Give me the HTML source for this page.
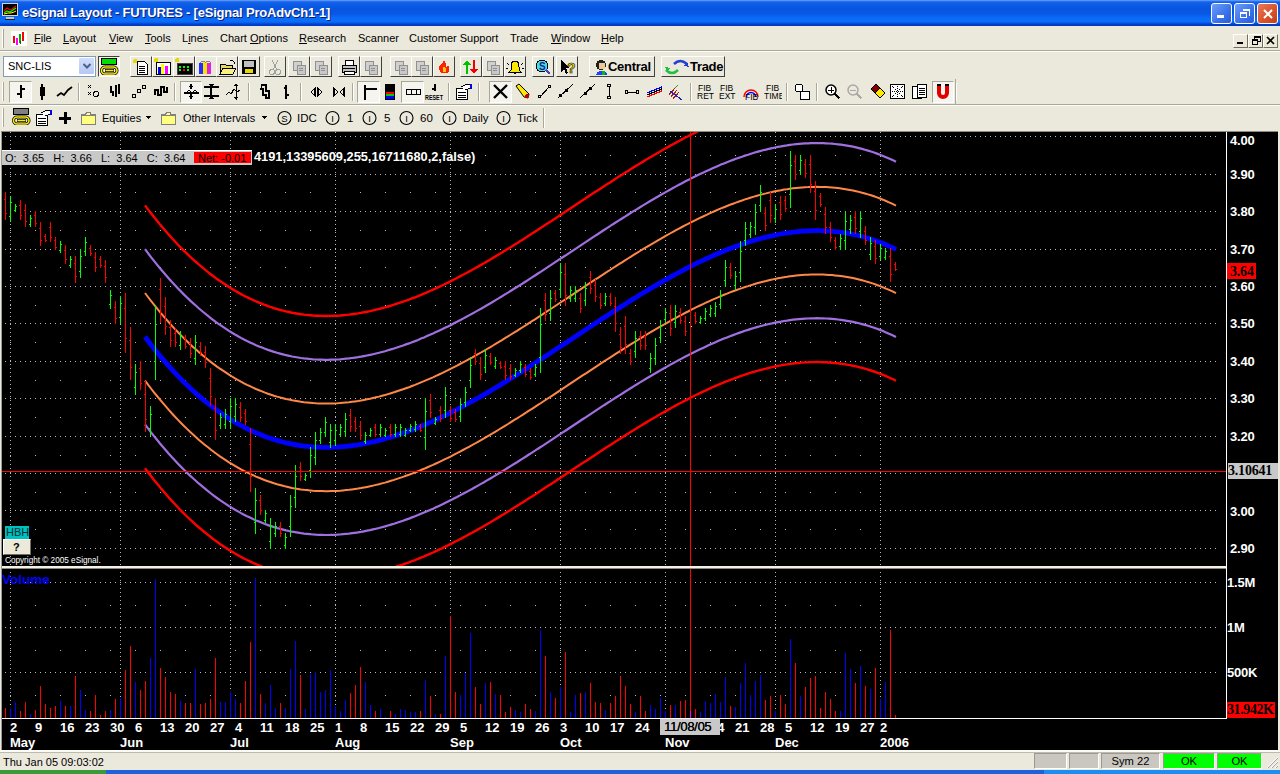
<!DOCTYPE html>
<html><head><meta charset="utf-8"><style>
html,body{margin:0;padding:0;}
body{width:1280px;height:774px;overflow:hidden;position:relative;background:#ebe8dc;font-family:'Liberation Sans', sans-serif;}
.t{position:absolute;white-space:nowrap;line-height:14px;font-family:'Liberation Sans', sans-serif;}
.abs{position:absolute;}
</style></head><body>
<svg class="abs" style="left:0;top:0" width="1280" height="774" viewBox="0 0 1280 774">
<rect x="2" y="132" width="1276" height="618" fill="#000"/>
<rect x="1" y="131" width="1" height="619" fill="#9c9a94"/>
<rect x="1" y="131" width="1277" height="1" fill="#8c8a80"/>
<path d="M5 136.5h1m4 0h1m4 0h1m4 0h1m4 0h1m4 0h1m4 0h1m4 0h1m4 0h1m4 0h1m4 0h1m4 0h1m4 0h1m4 0h1m4 0h1m4 0h1m4 0h1m4 0h1m4 0h1m4 0h1m4 0h1m4 0h1m4 0h1m4 0h1m4 0h1m4 0h1m4 0h1m4 0h1m4 0h1m4 0h1m4 0h1m4 0h1m4 0h1m4 0h1m4 0h1m4 0h1m4 0h1m4 0h1m4 0h1m4 0h1m4 0h1m4 0h1m4 0h1m4 0h1m4 0h1m4 0h1m4 0h1m4 0h1m4 0h1m4 0h1m4 0h1m4 0h1m4 0h1m4 0h1m4 0h1m4 0h1m4 0h1m4 0h1m4 0h1m4 0h1m4 0h1m4 0h1m4 0h1m4 0h1m4 0h1m4 0h1m4 0h1m4 0h1m4 0h1m4 0h1m4 0h1m4 0h1m4 0h1m4 0h1m4 0h1m4 0h1m4 0h1m4 0h1m4 0h1m4 0h1m4 0h1m4 0h1m4 0h1m4 0h1m4 0h1m4 0h1m4 0h1m4 0h1m4 0h1m4 0h1m4 0h1m4 0h1m4 0h1m4 0h1m4 0h1m4 0h1m4 0h1m4 0h1m4 0h1m4 0h1m4 0h1m4 0h1m4 0h1m4 0h1m4 0h1m4 0h1m4 0h1m4 0h1m4 0h1m4 0h1m4 0h1m4 0h1m4 0h1m4 0h1m4 0h1m4 0h1m4 0h1m4 0h1m4 0h1m4 0h1m4 0h1m4 0h1m4 0h1m4 0h1m4 0h1m4 0h1m4 0h1m4 0h1m4 0h1m4 0h1m4 0h1m4 0h1m4 0h1m4 0h1m4 0h1m4 0h1m4 0h1m4 0h1m4 0h1m4 0h1m4 0h1m4 0h1m4 0h1m4 0h1m4 0h1m4 0h1m4 0h1m4 0h1m4 0h1m4 0h1m4 0h1m4 0h1m4 0h1m4 0h1m4 0h1m4 0h1m4 0h1m4 0h1m4 0h1m4 0h1m4 0h1m4 0h1m4 0h1m4 0h1m4 0h1m4 0h1m4 0h1m4 0h1m4 0h1m4 0h1m4 0h1m4 0h1m4 0h1m4 0h1m4 0h1m4 0h1m4 0h1m4 0h1m4 0h1m4 0h1m4 0h1m4 0h1m4 0h1m4 0h1m4 0h1m4 0h1m4 0h1m4 0h1m4 0h1m4 0h1m4 0h1m4 0h1m4 0h1m4 0h1m4 0h1m4 0h1m4 0h1m4 0h1m4 0h1m4 0h1m4 0h1m4 0h1m4 0h1m4 0h1m4 0h1m4 0h1m4 0h1m4 0h1m4 0h1m4 0h1m4 0h1m4 0h1m4 0h1m4 0h1m4 0h1m4 0h1m4 0h1m4 0h1m4 0h1m4 0h1m4 0h1m4 0h1m4 0h1m4 0h1m4 0h1m4 0h1m4 0h1m4 0h1m4 0h1m4 0h1m4 0h1m4 0h1m4 0h1m4 0h1m4 0h1m4 0h1m4 0h1m4 0h1m4 0h1m4 0h1m4 0h1m4 0h1m4 0h1 M5 174.5h1m4 0h1m4 0h1m4 0h1m4 0h1m4 0h1m4 0h1m4 0h1m4 0h1m4 0h1m4 0h1m4 0h1m4 0h1m4 0h1m4 0h1m4 0h1m4 0h1m4 0h1m4 0h1m4 0h1m4 0h1m4 0h1m4 0h1m4 0h1m4 0h1m4 0h1m4 0h1m4 0h1m4 0h1m4 0h1m4 0h1m4 0h1m4 0h1m4 0h1m4 0h1m4 0h1m4 0h1m4 0h1m4 0h1m4 0h1m4 0h1m4 0h1m4 0h1m4 0h1m4 0h1m4 0h1m4 0h1m4 0h1m4 0h1m4 0h1m4 0h1m4 0h1m4 0h1m4 0h1m4 0h1m4 0h1m4 0h1m4 0h1m4 0h1m4 0h1m4 0h1m4 0h1m4 0h1m4 0h1m4 0h1m4 0h1m4 0h1m4 0h1m4 0h1m4 0h1m4 0h1m4 0h1m4 0h1m4 0h1m4 0h1m4 0h1m4 0h1m4 0h1m4 0h1m4 0h1m4 0h1m4 0h1m4 0h1m4 0h1m4 0h1m4 0h1m4 0h1m4 0h1m4 0h1m4 0h1m4 0h1m4 0h1m4 0h1m4 0h1m4 0h1m4 0h1m4 0h1m4 0h1m4 0h1m4 0h1m4 0h1m4 0h1m4 0h1m4 0h1m4 0h1m4 0h1m4 0h1m4 0h1m4 0h1m4 0h1m4 0h1m4 0h1m4 0h1m4 0h1m4 0h1m4 0h1m4 0h1m4 0h1m4 0h1m4 0h1m4 0h1m4 0h1m4 0h1m4 0h1m4 0h1m4 0h1m4 0h1m4 0h1m4 0h1m4 0h1m4 0h1m4 0h1m4 0h1m4 0h1m4 0h1m4 0h1m4 0h1m4 0h1m4 0h1m4 0h1m4 0h1m4 0h1m4 0h1m4 0h1m4 0h1m4 0h1m4 0h1m4 0h1m4 0h1m4 0h1m4 0h1m4 0h1m4 0h1m4 0h1m4 0h1m4 0h1m4 0h1m4 0h1m4 0h1m4 0h1m4 0h1m4 0h1m4 0h1m4 0h1m4 0h1m4 0h1m4 0h1m4 0h1m4 0h1m4 0h1m4 0h1m4 0h1m4 0h1m4 0h1m4 0h1m4 0h1m4 0h1m4 0h1m4 0h1m4 0h1m4 0h1m4 0h1m4 0h1m4 0h1m4 0h1m4 0h1m4 0h1m4 0h1m4 0h1m4 0h1m4 0h1m4 0h1m4 0h1m4 0h1m4 0h1m4 0h1m4 0h1m4 0h1m4 0h1m4 0h1m4 0h1m4 0h1m4 0h1m4 0h1m4 0h1m4 0h1m4 0h1m4 0h1m4 0h1m4 0h1m4 0h1m4 0h1m4 0h1m4 0h1m4 0h1m4 0h1m4 0h1m4 0h1m4 0h1m4 0h1m4 0h1m4 0h1m4 0h1m4 0h1m4 0h1m4 0h1m4 0h1m4 0h1m4 0h1m4 0h1m4 0h1m4 0h1m4 0h1m4 0h1m4 0h1m4 0h1m4 0h1m4 0h1m4 0h1m4 0h1m4 0h1m4 0h1m4 0h1 M5 211.5h1m4 0h1m4 0h1m4 0h1m4 0h1m4 0h1m4 0h1m4 0h1m4 0h1m4 0h1m4 0h1m4 0h1m4 0h1m4 0h1m4 0h1m4 0h1m4 0h1m4 0h1m4 0h1m4 0h1m4 0h1m4 0h1m4 0h1m4 0h1m4 0h1m4 0h1m4 0h1m4 0h1m4 0h1m4 0h1m4 0h1m4 0h1m4 0h1m4 0h1m4 0h1m4 0h1m4 0h1m4 0h1m4 0h1m4 0h1m4 0h1m4 0h1m4 0h1m4 0h1m4 0h1m4 0h1m4 0h1m4 0h1m4 0h1m4 0h1m4 0h1m4 0h1m4 0h1m4 0h1m4 0h1m4 0h1m4 0h1m4 0h1m4 0h1m4 0h1m4 0h1m4 0h1m4 0h1m4 0h1m4 0h1m4 0h1m4 0h1m4 0h1m4 0h1m4 0h1m4 0h1m4 0h1m4 0h1m4 0h1m4 0h1m4 0h1m4 0h1m4 0h1m4 0h1m4 0h1m4 0h1m4 0h1m4 0h1m4 0h1m4 0h1m4 0h1m4 0h1m4 0h1m4 0h1m4 0h1m4 0h1m4 0h1m4 0h1m4 0h1m4 0h1m4 0h1m4 0h1m4 0h1m4 0h1m4 0h1m4 0h1m4 0h1m4 0h1m4 0h1m4 0h1m4 0h1m4 0h1m4 0h1m4 0h1m4 0h1m4 0h1m4 0h1m4 0h1m4 0h1m4 0h1m4 0h1m4 0h1m4 0h1m4 0h1m4 0h1m4 0h1m4 0h1m4 0h1m4 0h1m4 0h1m4 0h1m4 0h1m4 0h1m4 0h1m4 0h1m4 0h1m4 0h1m4 0h1m4 0h1m4 0h1m4 0h1m4 0h1m4 0h1m4 0h1m4 0h1m4 0h1m4 0h1m4 0h1m4 0h1m4 0h1m4 0h1m4 0h1m4 0h1m4 0h1m4 0h1m4 0h1m4 0h1m4 0h1m4 0h1m4 0h1m4 0h1m4 0h1m4 0h1m4 0h1m4 0h1m4 0h1m4 0h1m4 0h1m4 0h1m4 0h1m4 0h1m4 0h1m4 0h1m4 0h1m4 0h1m4 0h1m4 0h1m4 0h1m4 0h1m4 0h1m4 0h1m4 0h1m4 0h1m4 0h1m4 0h1m4 0h1m4 0h1m4 0h1m4 0h1m4 0h1m4 0h1m4 0h1m4 0h1m4 0h1m4 0h1m4 0h1m4 0h1m4 0h1m4 0h1m4 0h1m4 0h1m4 0h1m4 0h1m4 0h1m4 0h1m4 0h1m4 0h1m4 0h1m4 0h1m4 0h1m4 0h1m4 0h1m4 0h1m4 0h1m4 0h1m4 0h1m4 0h1m4 0h1m4 0h1m4 0h1m4 0h1m4 0h1m4 0h1m4 0h1m4 0h1m4 0h1m4 0h1m4 0h1m4 0h1m4 0h1m4 0h1m4 0h1m4 0h1m4 0h1m4 0h1m4 0h1m4 0h1m4 0h1m4 0h1m4 0h1m4 0h1m4 0h1m4 0h1m4 0h1m4 0h1m4 0h1m4 0h1m4 0h1 M5 249.5h1m4 0h1m4 0h1m4 0h1m4 0h1m4 0h1m4 0h1m4 0h1m4 0h1m4 0h1m4 0h1m4 0h1m4 0h1m4 0h1m4 0h1m4 0h1m4 0h1m4 0h1m4 0h1m4 0h1m4 0h1m4 0h1m4 0h1m4 0h1m4 0h1m4 0h1m4 0h1m4 0h1m4 0h1m4 0h1m4 0h1m4 0h1m4 0h1m4 0h1m4 0h1m4 0h1m4 0h1m4 0h1m4 0h1m4 0h1m4 0h1m4 0h1m4 0h1m4 0h1m4 0h1m4 0h1m4 0h1m4 0h1m4 0h1m4 0h1m4 0h1m4 0h1m4 0h1m4 0h1m4 0h1m4 0h1m4 0h1m4 0h1m4 0h1m4 0h1m4 0h1m4 0h1m4 0h1m4 0h1m4 0h1m4 0h1m4 0h1m4 0h1m4 0h1m4 0h1m4 0h1m4 0h1m4 0h1m4 0h1m4 0h1m4 0h1m4 0h1m4 0h1m4 0h1m4 0h1m4 0h1m4 0h1m4 0h1m4 0h1m4 0h1m4 0h1m4 0h1m4 0h1m4 0h1m4 0h1m4 0h1m4 0h1m4 0h1m4 0h1m4 0h1m4 0h1m4 0h1m4 0h1m4 0h1m4 0h1m4 0h1m4 0h1m4 0h1m4 0h1m4 0h1m4 0h1m4 0h1m4 0h1m4 0h1m4 0h1m4 0h1m4 0h1m4 0h1m4 0h1m4 0h1m4 0h1m4 0h1m4 0h1m4 0h1m4 0h1m4 0h1m4 0h1m4 0h1m4 0h1m4 0h1m4 0h1m4 0h1m4 0h1m4 0h1m4 0h1m4 0h1m4 0h1m4 0h1m4 0h1m4 0h1m4 0h1m4 0h1m4 0h1m4 0h1m4 0h1m4 0h1m4 0h1m4 0h1m4 0h1m4 0h1m4 0h1m4 0h1m4 0h1m4 0h1m4 0h1m4 0h1m4 0h1m4 0h1m4 0h1m4 0h1m4 0h1m4 0h1m4 0h1m4 0h1m4 0h1m4 0h1m4 0h1m4 0h1m4 0h1m4 0h1m4 0h1m4 0h1m4 0h1m4 0h1m4 0h1m4 0h1m4 0h1m4 0h1m4 0h1m4 0h1m4 0h1m4 0h1m4 0h1m4 0h1m4 0h1m4 0h1m4 0h1m4 0h1m4 0h1m4 0h1m4 0h1m4 0h1m4 0h1m4 0h1m4 0h1m4 0h1m4 0h1m4 0h1m4 0h1m4 0h1m4 0h1m4 0h1m4 0h1m4 0h1m4 0h1m4 0h1m4 0h1m4 0h1m4 0h1m4 0h1m4 0h1m4 0h1m4 0h1m4 0h1m4 0h1m4 0h1m4 0h1m4 0h1m4 0h1m4 0h1m4 0h1m4 0h1m4 0h1m4 0h1m4 0h1m4 0h1m4 0h1m4 0h1m4 0h1m4 0h1m4 0h1m4 0h1m4 0h1m4 0h1m4 0h1m4 0h1m4 0h1m4 0h1m4 0h1m4 0h1m4 0h1m4 0h1m4 0h1m4 0h1m4 0h1m4 0h1m4 0h1m4 0h1 M5 286.5h1m4 0h1m4 0h1m4 0h1m4 0h1m4 0h1m4 0h1m4 0h1m4 0h1m4 0h1m4 0h1m4 0h1m4 0h1m4 0h1m4 0h1m4 0h1m4 0h1m4 0h1m4 0h1m4 0h1m4 0h1m4 0h1m4 0h1m4 0h1m4 0h1m4 0h1m4 0h1m4 0h1m4 0h1m4 0h1m4 0h1m4 0h1m4 0h1m4 0h1m4 0h1m4 0h1m4 0h1m4 0h1m4 0h1m4 0h1m4 0h1m4 0h1m4 0h1m4 0h1m4 0h1m4 0h1m4 0h1m4 0h1m4 0h1m4 0h1m4 0h1m4 0h1m4 0h1m4 0h1m4 0h1m4 0h1m4 0h1m4 0h1m4 0h1m4 0h1m4 0h1m4 0h1m4 0h1m4 0h1m4 0h1m4 0h1m4 0h1m4 0h1m4 0h1m4 0h1m4 0h1m4 0h1m4 0h1m4 0h1m4 0h1m4 0h1m4 0h1m4 0h1m4 0h1m4 0h1m4 0h1m4 0h1m4 0h1m4 0h1m4 0h1m4 0h1m4 0h1m4 0h1m4 0h1m4 0h1m4 0h1m4 0h1m4 0h1m4 0h1m4 0h1m4 0h1m4 0h1m4 0h1m4 0h1m4 0h1m4 0h1m4 0h1m4 0h1m4 0h1m4 0h1m4 0h1m4 0h1m4 0h1m4 0h1m4 0h1m4 0h1m4 0h1m4 0h1m4 0h1m4 0h1m4 0h1m4 0h1m4 0h1m4 0h1m4 0h1m4 0h1m4 0h1m4 0h1m4 0h1m4 0h1m4 0h1m4 0h1m4 0h1m4 0h1m4 0h1m4 0h1m4 0h1m4 0h1m4 0h1m4 0h1m4 0h1m4 0h1m4 0h1m4 0h1m4 0h1m4 0h1m4 0h1m4 0h1m4 0h1m4 0h1m4 0h1m4 0h1m4 0h1m4 0h1m4 0h1m4 0h1m4 0h1m4 0h1m4 0h1m4 0h1m4 0h1m4 0h1m4 0h1m4 0h1m4 0h1m4 0h1m4 0h1m4 0h1m4 0h1m4 0h1m4 0h1m4 0h1m4 0h1m4 0h1m4 0h1m4 0h1m4 0h1m4 0h1m4 0h1m4 0h1m4 0h1m4 0h1m4 0h1m4 0h1m4 0h1m4 0h1m4 0h1m4 0h1m4 0h1m4 0h1m4 0h1m4 0h1m4 0h1m4 0h1m4 0h1m4 0h1m4 0h1m4 0h1m4 0h1m4 0h1m4 0h1m4 0h1m4 0h1m4 0h1m4 0h1m4 0h1m4 0h1m4 0h1m4 0h1m4 0h1m4 0h1m4 0h1m4 0h1m4 0h1m4 0h1m4 0h1m4 0h1m4 0h1m4 0h1m4 0h1m4 0h1m4 0h1m4 0h1m4 0h1m4 0h1m4 0h1m4 0h1m4 0h1m4 0h1m4 0h1m4 0h1m4 0h1m4 0h1m4 0h1m4 0h1m4 0h1m4 0h1m4 0h1m4 0h1m4 0h1m4 0h1m4 0h1m4 0h1m4 0h1m4 0h1m4 0h1m4 0h1m4 0h1 M5 323.5h1m4 0h1m4 0h1m4 0h1m4 0h1m4 0h1m4 0h1m4 0h1m4 0h1m4 0h1m4 0h1m4 0h1m4 0h1m4 0h1m4 0h1m4 0h1m4 0h1m4 0h1m4 0h1m4 0h1m4 0h1m4 0h1m4 0h1m4 0h1m4 0h1m4 0h1m4 0h1m4 0h1m4 0h1m4 0h1m4 0h1m4 0h1m4 0h1m4 0h1m4 0h1m4 0h1m4 0h1m4 0h1m4 0h1m4 0h1m4 0h1m4 0h1m4 0h1m4 0h1m4 0h1m4 0h1m4 0h1m4 0h1m4 0h1m4 0h1m4 0h1m4 0h1m4 0h1m4 0h1m4 0h1m4 0h1m4 0h1m4 0h1m4 0h1m4 0h1m4 0h1m4 0h1m4 0h1m4 0h1m4 0h1m4 0h1m4 0h1m4 0h1m4 0h1m4 0h1m4 0h1m4 0h1m4 0h1m4 0h1m4 0h1m4 0h1m4 0h1m4 0h1m4 0h1m4 0h1m4 0h1m4 0h1m4 0h1m4 0h1m4 0h1m4 0h1m4 0h1m4 0h1m4 0h1m4 0h1m4 0h1m4 0h1m4 0h1m4 0h1m4 0h1m4 0h1m4 0h1m4 0h1m4 0h1m4 0h1m4 0h1m4 0h1m4 0h1m4 0h1m4 0h1m4 0h1m4 0h1m4 0h1m4 0h1m4 0h1m4 0h1m4 0h1m4 0h1m4 0h1m4 0h1m4 0h1m4 0h1m4 0h1m4 0h1m4 0h1m4 0h1m4 0h1m4 0h1m4 0h1m4 0h1m4 0h1m4 0h1m4 0h1m4 0h1m4 0h1m4 0h1m4 0h1m4 0h1m4 0h1m4 0h1m4 0h1m4 0h1m4 0h1m4 0h1m4 0h1m4 0h1m4 0h1m4 0h1m4 0h1m4 0h1m4 0h1m4 0h1m4 0h1m4 0h1m4 0h1m4 0h1m4 0h1m4 0h1m4 0h1m4 0h1m4 0h1m4 0h1m4 0h1m4 0h1m4 0h1m4 0h1m4 0h1m4 0h1m4 0h1m4 0h1m4 0h1m4 0h1m4 0h1m4 0h1m4 0h1m4 0h1m4 0h1m4 0h1m4 0h1m4 0h1m4 0h1m4 0h1m4 0h1m4 0h1m4 0h1m4 0h1m4 0h1m4 0h1m4 0h1m4 0h1m4 0h1m4 0h1m4 0h1m4 0h1m4 0h1m4 0h1m4 0h1m4 0h1m4 0h1m4 0h1m4 0h1m4 0h1m4 0h1m4 0h1m4 0h1m4 0h1m4 0h1m4 0h1m4 0h1m4 0h1m4 0h1m4 0h1m4 0h1m4 0h1m4 0h1m4 0h1m4 0h1m4 0h1m4 0h1m4 0h1m4 0h1m4 0h1m4 0h1m4 0h1m4 0h1m4 0h1m4 0h1m4 0h1m4 0h1m4 0h1m4 0h1m4 0h1m4 0h1m4 0h1m4 0h1m4 0h1m4 0h1m4 0h1m4 0h1m4 0h1m4 0h1m4 0h1m4 0h1m4 0h1m4 0h1m4 0h1m4 0h1m4 0h1 M5 361.5h1m4 0h1m4 0h1m4 0h1m4 0h1m4 0h1m4 0h1m4 0h1m4 0h1m4 0h1m4 0h1m4 0h1m4 0h1m4 0h1m4 0h1m4 0h1m4 0h1m4 0h1m4 0h1m4 0h1m4 0h1m4 0h1m4 0h1m4 0h1m4 0h1m4 0h1m4 0h1m4 0h1m4 0h1m4 0h1m4 0h1m4 0h1m4 0h1m4 0h1m4 0h1m4 0h1m4 0h1m4 0h1m4 0h1m4 0h1m4 0h1m4 0h1m4 0h1m4 0h1m4 0h1m4 0h1m4 0h1m4 0h1m4 0h1m4 0h1m4 0h1m4 0h1m4 0h1m4 0h1m4 0h1m4 0h1m4 0h1m4 0h1m4 0h1m4 0h1m4 0h1m4 0h1m4 0h1m4 0h1m4 0h1m4 0h1m4 0h1m4 0h1m4 0h1m4 0h1m4 0h1m4 0h1m4 0h1m4 0h1m4 0h1m4 0h1m4 0h1m4 0h1m4 0h1m4 0h1m4 0h1m4 0h1m4 0h1m4 0h1m4 0h1m4 0h1m4 0h1m4 0h1m4 0h1m4 0h1m4 0h1m4 0h1m4 0h1m4 0h1m4 0h1m4 0h1m4 0h1m4 0h1m4 0h1m4 0h1m4 0h1m4 0h1m4 0h1m4 0h1m4 0h1m4 0h1m4 0h1m4 0h1m4 0h1m4 0h1m4 0h1m4 0h1m4 0h1m4 0h1m4 0h1m4 0h1m4 0h1m4 0h1m4 0h1m4 0h1m4 0h1m4 0h1m4 0h1m4 0h1m4 0h1m4 0h1m4 0h1m4 0h1m4 0h1m4 0h1m4 0h1m4 0h1m4 0h1m4 0h1m4 0h1m4 0h1m4 0h1m4 0h1m4 0h1m4 0h1m4 0h1m4 0h1m4 0h1m4 0h1m4 0h1m4 0h1m4 0h1m4 0h1m4 0h1m4 0h1m4 0h1m4 0h1m4 0h1m4 0h1m4 0h1m4 0h1m4 0h1m4 0h1m4 0h1m4 0h1m4 0h1m4 0h1m4 0h1m4 0h1m4 0h1m4 0h1m4 0h1m4 0h1m4 0h1m4 0h1m4 0h1m4 0h1m4 0h1m4 0h1m4 0h1m4 0h1m4 0h1m4 0h1m4 0h1m4 0h1m4 0h1m4 0h1m4 0h1m4 0h1m4 0h1m4 0h1m4 0h1m4 0h1m4 0h1m4 0h1m4 0h1m4 0h1m4 0h1m4 0h1m4 0h1m4 0h1m4 0h1m4 0h1m4 0h1m4 0h1m4 0h1m4 0h1m4 0h1m4 0h1m4 0h1m4 0h1m4 0h1m4 0h1m4 0h1m4 0h1m4 0h1m4 0h1m4 0h1m4 0h1m4 0h1m4 0h1m4 0h1m4 0h1m4 0h1m4 0h1m4 0h1m4 0h1m4 0h1m4 0h1m4 0h1m4 0h1m4 0h1m4 0h1m4 0h1m4 0h1m4 0h1m4 0h1m4 0h1m4 0h1m4 0h1m4 0h1m4 0h1m4 0h1m4 0h1m4 0h1m4 0h1m4 0h1m4 0h1 M5 398.5h1m4 0h1m4 0h1m4 0h1m4 0h1m4 0h1m4 0h1m4 0h1m4 0h1m4 0h1m4 0h1m4 0h1m4 0h1m4 0h1m4 0h1m4 0h1m4 0h1m4 0h1m4 0h1m4 0h1m4 0h1m4 0h1m4 0h1m4 0h1m4 0h1m4 0h1m4 0h1m4 0h1m4 0h1m4 0h1m4 0h1m4 0h1m4 0h1m4 0h1m4 0h1m4 0h1m4 0h1m4 0h1m4 0h1m4 0h1m4 0h1m4 0h1m4 0h1m4 0h1m4 0h1m4 0h1m4 0h1m4 0h1m4 0h1m4 0h1m4 0h1m4 0h1m4 0h1m4 0h1m4 0h1m4 0h1m4 0h1m4 0h1m4 0h1m4 0h1m4 0h1m4 0h1m4 0h1m4 0h1m4 0h1m4 0h1m4 0h1m4 0h1m4 0h1m4 0h1m4 0h1m4 0h1m4 0h1m4 0h1m4 0h1m4 0h1m4 0h1m4 0h1m4 0h1m4 0h1m4 0h1m4 0h1m4 0h1m4 0h1m4 0h1m4 0h1m4 0h1m4 0h1m4 0h1m4 0h1m4 0h1m4 0h1m4 0h1m4 0h1m4 0h1m4 0h1m4 0h1m4 0h1m4 0h1m4 0h1m4 0h1m4 0h1m4 0h1m4 0h1m4 0h1m4 0h1m4 0h1m4 0h1m4 0h1m4 0h1m4 0h1m4 0h1m4 0h1m4 0h1m4 0h1m4 0h1m4 0h1m4 0h1m4 0h1m4 0h1m4 0h1m4 0h1m4 0h1m4 0h1m4 0h1m4 0h1m4 0h1m4 0h1m4 0h1m4 0h1m4 0h1m4 0h1m4 0h1m4 0h1m4 0h1m4 0h1m4 0h1m4 0h1m4 0h1m4 0h1m4 0h1m4 0h1m4 0h1m4 0h1m4 0h1m4 0h1m4 0h1m4 0h1m4 0h1m4 0h1m4 0h1m4 0h1m4 0h1m4 0h1m4 0h1m4 0h1m4 0h1m4 0h1m4 0h1m4 0h1m4 0h1m4 0h1m4 0h1m4 0h1m4 0h1m4 0h1m4 0h1m4 0h1m4 0h1m4 0h1m4 0h1m4 0h1m4 0h1m4 0h1m4 0h1m4 0h1m4 0h1m4 0h1m4 0h1m4 0h1m4 0h1m4 0h1m4 0h1m4 0h1m4 0h1m4 0h1m4 0h1m4 0h1m4 0h1m4 0h1m4 0h1m4 0h1m4 0h1m4 0h1m4 0h1m4 0h1m4 0h1m4 0h1m4 0h1m4 0h1m4 0h1m4 0h1m4 0h1m4 0h1m4 0h1m4 0h1m4 0h1m4 0h1m4 0h1m4 0h1m4 0h1m4 0h1m4 0h1m4 0h1m4 0h1m4 0h1m4 0h1m4 0h1m4 0h1m4 0h1m4 0h1m4 0h1m4 0h1m4 0h1m4 0h1m4 0h1m4 0h1m4 0h1m4 0h1m4 0h1m4 0h1m4 0h1m4 0h1m4 0h1m4 0h1m4 0h1m4 0h1m4 0h1m4 0h1m4 0h1m4 0h1m4 0h1m4 0h1 M5 436.5h1m4 0h1m4 0h1m4 0h1m4 0h1m4 0h1m4 0h1m4 0h1m4 0h1m4 0h1m4 0h1m4 0h1m4 0h1m4 0h1m4 0h1m4 0h1m4 0h1m4 0h1m4 0h1m4 0h1m4 0h1m4 0h1m4 0h1m4 0h1m4 0h1m4 0h1m4 0h1m4 0h1m4 0h1m4 0h1m4 0h1m4 0h1m4 0h1m4 0h1m4 0h1m4 0h1m4 0h1m4 0h1m4 0h1m4 0h1m4 0h1m4 0h1m4 0h1m4 0h1m4 0h1m4 0h1m4 0h1m4 0h1m4 0h1m4 0h1m4 0h1m4 0h1m4 0h1m4 0h1m4 0h1m4 0h1m4 0h1m4 0h1m4 0h1m4 0h1m4 0h1m4 0h1m4 0h1m4 0h1m4 0h1m4 0h1m4 0h1m4 0h1m4 0h1m4 0h1m4 0h1m4 0h1m4 0h1m4 0h1m4 0h1m4 0h1m4 0h1m4 0h1m4 0h1m4 0h1m4 0h1m4 0h1m4 0h1m4 0h1m4 0h1m4 0h1m4 0h1m4 0h1m4 0h1m4 0h1m4 0h1m4 0h1m4 0h1m4 0h1m4 0h1m4 0h1m4 0h1m4 0h1m4 0h1m4 0h1m4 0h1m4 0h1m4 0h1m4 0h1m4 0h1m4 0h1m4 0h1m4 0h1m4 0h1m4 0h1m4 0h1m4 0h1m4 0h1m4 0h1m4 0h1m4 0h1m4 0h1m4 0h1m4 0h1m4 0h1m4 0h1m4 0h1m4 0h1m4 0h1m4 0h1m4 0h1m4 0h1m4 0h1m4 0h1m4 0h1m4 0h1m4 0h1m4 0h1m4 0h1m4 0h1m4 0h1m4 0h1m4 0h1m4 0h1m4 0h1m4 0h1m4 0h1m4 0h1m4 0h1m4 0h1m4 0h1m4 0h1m4 0h1m4 0h1m4 0h1m4 0h1m4 0h1m4 0h1m4 0h1m4 0h1m4 0h1m4 0h1m4 0h1m4 0h1m4 0h1m4 0h1m4 0h1m4 0h1m4 0h1m4 0h1m4 0h1m4 0h1m4 0h1m4 0h1m4 0h1m4 0h1m4 0h1m4 0h1m4 0h1m4 0h1m4 0h1m4 0h1m4 0h1m4 0h1m4 0h1m4 0h1m4 0h1m4 0h1m4 0h1m4 0h1m4 0h1m4 0h1m4 0h1m4 0h1m4 0h1m4 0h1m4 0h1m4 0h1m4 0h1m4 0h1m4 0h1m4 0h1m4 0h1m4 0h1m4 0h1m4 0h1m4 0h1m4 0h1m4 0h1m4 0h1m4 0h1m4 0h1m4 0h1m4 0h1m4 0h1m4 0h1m4 0h1m4 0h1m4 0h1m4 0h1m4 0h1m4 0h1m4 0h1m4 0h1m4 0h1m4 0h1m4 0h1m4 0h1m4 0h1m4 0h1m4 0h1m4 0h1m4 0h1m4 0h1m4 0h1m4 0h1m4 0h1m4 0h1m4 0h1m4 0h1m4 0h1m4 0h1m4 0h1m4 0h1m4 0h1m4 0h1m4 0h1m4 0h1 M5 473.5h1m4 0h1m4 0h1m4 0h1m4 0h1m4 0h1m4 0h1m4 0h1m4 0h1m4 0h1m4 0h1m4 0h1m4 0h1m4 0h1m4 0h1m4 0h1m4 0h1m4 0h1m4 0h1m4 0h1m4 0h1m4 0h1m4 0h1m4 0h1m4 0h1m4 0h1m4 0h1m4 0h1m4 0h1m4 0h1m4 0h1m4 0h1m4 0h1m4 0h1m4 0h1m4 0h1m4 0h1m4 0h1m4 0h1m4 0h1m4 0h1m4 0h1m4 0h1m4 0h1m4 0h1m4 0h1m4 0h1m4 0h1m4 0h1m4 0h1m4 0h1m4 0h1m4 0h1m4 0h1m4 0h1m4 0h1m4 0h1m4 0h1m4 0h1m4 0h1m4 0h1m4 0h1m4 0h1m4 0h1m4 0h1m4 0h1m4 0h1m4 0h1m4 0h1m4 0h1m4 0h1m4 0h1m4 0h1m4 0h1m4 0h1m4 0h1m4 0h1m4 0h1m4 0h1m4 0h1m4 0h1m4 0h1m4 0h1m4 0h1m4 0h1m4 0h1m4 0h1m4 0h1m4 0h1m4 0h1m4 0h1m4 0h1m4 0h1m4 0h1m4 0h1m4 0h1m4 0h1m4 0h1m4 0h1m4 0h1m4 0h1m4 0h1m4 0h1m4 0h1m4 0h1m4 0h1m4 0h1m4 0h1m4 0h1m4 0h1m4 0h1m4 0h1m4 0h1m4 0h1m4 0h1m4 0h1m4 0h1m4 0h1m4 0h1m4 0h1m4 0h1m4 0h1m4 0h1m4 0h1m4 0h1m4 0h1m4 0h1m4 0h1m4 0h1m4 0h1m4 0h1m4 0h1m4 0h1m4 0h1m4 0h1m4 0h1m4 0h1m4 0h1m4 0h1m4 0h1m4 0h1m4 0h1m4 0h1m4 0h1m4 0h1m4 0h1m4 0h1m4 0h1m4 0h1m4 0h1m4 0h1m4 0h1m4 0h1m4 0h1m4 0h1m4 0h1m4 0h1m4 0h1m4 0h1m4 0h1m4 0h1m4 0h1m4 0h1m4 0h1m4 0h1m4 0h1m4 0h1m4 0h1m4 0h1m4 0h1m4 0h1m4 0h1m4 0h1m4 0h1m4 0h1m4 0h1m4 0h1m4 0h1m4 0h1m4 0h1m4 0h1m4 0h1m4 0h1m4 0h1m4 0h1m4 0h1m4 0h1m4 0h1m4 0h1m4 0h1m4 0h1m4 0h1m4 0h1m4 0h1m4 0h1m4 0h1m4 0h1m4 0h1m4 0h1m4 0h1m4 0h1m4 0h1m4 0h1m4 0h1m4 0h1m4 0h1m4 0h1m4 0h1m4 0h1m4 0h1m4 0h1m4 0h1m4 0h1m4 0h1m4 0h1m4 0h1m4 0h1m4 0h1m4 0h1m4 0h1m4 0h1m4 0h1m4 0h1m4 0h1m4 0h1m4 0h1m4 0h1m4 0h1m4 0h1m4 0h1m4 0h1m4 0h1m4 0h1m4 0h1m4 0h1m4 0h1m4 0h1m4 0h1m4 0h1m4 0h1m4 0h1m4 0h1m4 0h1 M5 510.5h1m4 0h1m4 0h1m4 0h1m4 0h1m4 0h1m4 0h1m4 0h1m4 0h1m4 0h1m4 0h1m4 0h1m4 0h1m4 0h1m4 0h1m4 0h1m4 0h1m4 0h1m4 0h1m4 0h1m4 0h1m4 0h1m4 0h1m4 0h1m4 0h1m4 0h1m4 0h1m4 0h1m4 0h1m4 0h1m4 0h1m4 0h1m4 0h1m4 0h1m4 0h1m4 0h1m4 0h1m4 0h1m4 0h1m4 0h1m4 0h1m4 0h1m4 0h1m4 0h1m4 0h1m4 0h1m4 0h1m4 0h1m4 0h1m4 0h1m4 0h1m4 0h1m4 0h1m4 0h1m4 0h1m4 0h1m4 0h1m4 0h1m4 0h1m4 0h1m4 0h1m4 0h1m4 0h1m4 0h1m4 0h1m4 0h1m4 0h1m4 0h1m4 0h1m4 0h1m4 0h1m4 0h1m4 0h1m4 0h1m4 0h1m4 0h1m4 0h1m4 0h1m4 0h1m4 0h1m4 0h1m4 0h1m4 0h1m4 0h1m4 0h1m4 0h1m4 0h1m4 0h1m4 0h1m4 0h1m4 0h1m4 0h1m4 0h1m4 0h1m4 0h1m4 0h1m4 0h1m4 0h1m4 0h1m4 0h1m4 0h1m4 0h1m4 0h1m4 0h1m4 0h1m4 0h1m4 0h1m4 0h1m4 0h1m4 0h1m4 0h1m4 0h1m4 0h1m4 0h1m4 0h1m4 0h1m4 0h1m4 0h1m4 0h1m4 0h1m4 0h1m4 0h1m4 0h1m4 0h1m4 0h1m4 0h1m4 0h1m4 0h1m4 0h1m4 0h1m4 0h1m4 0h1m4 0h1m4 0h1m4 0h1m4 0h1m4 0h1m4 0h1m4 0h1m4 0h1m4 0h1m4 0h1m4 0h1m4 0h1m4 0h1m4 0h1m4 0h1m4 0h1m4 0h1m4 0h1m4 0h1m4 0h1m4 0h1m4 0h1m4 0h1m4 0h1m4 0h1m4 0h1m4 0h1m4 0h1m4 0h1m4 0h1m4 0h1m4 0h1m4 0h1m4 0h1m4 0h1m4 0h1m4 0h1m4 0h1m4 0h1m4 0h1m4 0h1m4 0h1m4 0h1m4 0h1m4 0h1m4 0h1m4 0h1m4 0h1m4 0h1m4 0h1m4 0h1m4 0h1m4 0h1m4 0h1m4 0h1m4 0h1m4 0h1m4 0h1m4 0h1m4 0h1m4 0h1m4 0h1m4 0h1m4 0h1m4 0h1m4 0h1m4 0h1m4 0h1m4 0h1m4 0h1m4 0h1m4 0h1m4 0h1m4 0h1m4 0h1m4 0h1m4 0h1m4 0h1m4 0h1m4 0h1m4 0h1m4 0h1m4 0h1m4 0h1m4 0h1m4 0h1m4 0h1m4 0h1m4 0h1m4 0h1m4 0h1m4 0h1m4 0h1m4 0h1m4 0h1m4 0h1m4 0h1m4 0h1m4 0h1m4 0h1m4 0h1m4 0h1m4 0h1m4 0h1m4 0h1m4 0h1m4 0h1m4 0h1m4 0h1m4 0h1m4 0h1 M5 548.5h1m4 0h1m4 0h1m4 0h1m4 0h1m4 0h1m4 0h1m4 0h1m4 0h1m4 0h1m4 0h1m4 0h1m4 0h1m4 0h1m4 0h1m4 0h1m4 0h1m4 0h1m4 0h1m4 0h1m4 0h1m4 0h1m4 0h1m4 0h1m4 0h1m4 0h1m4 0h1m4 0h1m4 0h1m4 0h1m4 0h1m4 0h1m4 0h1m4 0h1m4 0h1m4 0h1m4 0h1m4 0h1m4 0h1m4 0h1m4 0h1m4 0h1m4 0h1m4 0h1m4 0h1m4 0h1m4 0h1m4 0h1m4 0h1m4 0h1m4 0h1m4 0h1m4 0h1m4 0h1m4 0h1m4 0h1m4 0h1m4 0h1m4 0h1m4 0h1m4 0h1m4 0h1m4 0h1m4 0h1m4 0h1m4 0h1m4 0h1m4 0h1m4 0h1m4 0h1m4 0h1m4 0h1m4 0h1m4 0h1m4 0h1m4 0h1m4 0h1m4 0h1m4 0h1m4 0h1m4 0h1m4 0h1m4 0h1m4 0h1m4 0h1m4 0h1m4 0h1m4 0h1m4 0h1m4 0h1m4 0h1m4 0h1m4 0h1m4 0h1m4 0h1m4 0h1m4 0h1m4 0h1m4 0h1m4 0h1m4 0h1m4 0h1m4 0h1m4 0h1m4 0h1m4 0h1m4 0h1m4 0h1m4 0h1m4 0h1m4 0h1m4 0h1m4 0h1m4 0h1m4 0h1m4 0h1m4 0h1m4 0h1m4 0h1m4 0h1m4 0h1m4 0h1m4 0h1m4 0h1m4 0h1m4 0h1m4 0h1m4 0h1m4 0h1m4 0h1m4 0h1m4 0h1m4 0h1m4 0h1m4 0h1m4 0h1m4 0h1m4 0h1m4 0h1m4 0h1m4 0h1m4 0h1m4 0h1m4 0h1m4 0h1m4 0h1m4 0h1m4 0h1m4 0h1m4 0h1m4 0h1m4 0h1m4 0h1m4 0h1m4 0h1m4 0h1m4 0h1m4 0h1m4 0h1m4 0h1m4 0h1m4 0h1m4 0h1m4 0h1m4 0h1m4 0h1m4 0h1m4 0h1m4 0h1m4 0h1m4 0h1m4 0h1m4 0h1m4 0h1m4 0h1m4 0h1m4 0h1m4 0h1m4 0h1m4 0h1m4 0h1m4 0h1m4 0h1m4 0h1m4 0h1m4 0h1m4 0h1m4 0h1m4 0h1m4 0h1m4 0h1m4 0h1m4 0h1m4 0h1m4 0h1m4 0h1m4 0h1m4 0h1m4 0h1m4 0h1m4 0h1m4 0h1m4 0h1m4 0h1m4 0h1m4 0h1m4 0h1m4 0h1m4 0h1m4 0h1m4 0h1m4 0h1m4 0h1m4 0h1m4 0h1m4 0h1m4 0h1m4 0h1m4 0h1m4 0h1m4 0h1m4 0h1m4 0h1m4 0h1m4 0h1m4 0h1m4 0h1m4 0h1m4 0h1m4 0h1m4 0h1m4 0h1m4 0h1m4 0h1m4 0h1m4 0h1m4 0h1m4 0h1m4 0h1m4 0h1m4 0h1m4 0h1m4 0h1 M5 582.5h1m4 0h1m4 0h1m4 0h1m4 0h1m4 0h1m4 0h1m4 0h1m4 0h1m4 0h1m4 0h1m4 0h1m4 0h1m4 0h1m4 0h1m4 0h1m4 0h1m4 0h1m4 0h1m4 0h1m4 0h1m4 0h1m4 0h1m4 0h1m4 0h1m4 0h1m4 0h1m4 0h1m4 0h1m4 0h1m4 0h1m4 0h1m4 0h1m4 0h1m4 0h1m4 0h1m4 0h1m4 0h1m4 0h1m4 0h1m4 0h1m4 0h1m4 0h1m4 0h1m4 0h1m4 0h1m4 0h1m4 0h1m4 0h1m4 0h1m4 0h1m4 0h1m4 0h1m4 0h1m4 0h1m4 0h1m4 0h1m4 0h1m4 0h1m4 0h1m4 0h1m4 0h1m4 0h1m4 0h1m4 0h1m4 0h1m4 0h1m4 0h1m4 0h1m4 0h1m4 0h1m4 0h1m4 0h1m4 0h1m4 0h1m4 0h1m4 0h1m4 0h1m4 0h1m4 0h1m4 0h1m4 0h1m4 0h1m4 0h1m4 0h1m4 0h1m4 0h1m4 0h1m4 0h1m4 0h1m4 0h1m4 0h1m4 0h1m4 0h1m4 0h1m4 0h1m4 0h1m4 0h1m4 0h1m4 0h1m4 0h1m4 0h1m4 0h1m4 0h1m4 0h1m4 0h1m4 0h1m4 0h1m4 0h1m4 0h1m4 0h1m4 0h1m4 0h1m4 0h1m4 0h1m4 0h1m4 0h1m4 0h1m4 0h1m4 0h1m4 0h1m4 0h1m4 0h1m4 0h1m4 0h1m4 0h1m4 0h1m4 0h1m4 0h1m4 0h1m4 0h1m4 0h1m4 0h1m4 0h1m4 0h1m4 0h1m4 0h1m4 0h1m4 0h1m4 0h1m4 0h1m4 0h1m4 0h1m4 0h1m4 0h1m4 0h1m4 0h1m4 0h1m4 0h1m4 0h1m4 0h1m4 0h1m4 0h1m4 0h1m4 0h1m4 0h1m4 0h1m4 0h1m4 0h1m4 0h1m4 0h1m4 0h1m4 0h1m4 0h1m4 0h1m4 0h1m4 0h1m4 0h1m4 0h1m4 0h1m4 0h1m4 0h1m4 0h1m4 0h1m4 0h1m4 0h1m4 0h1m4 0h1m4 0h1m4 0h1m4 0h1m4 0h1m4 0h1m4 0h1m4 0h1m4 0h1m4 0h1m4 0h1m4 0h1m4 0h1m4 0h1m4 0h1m4 0h1m4 0h1m4 0h1m4 0h1m4 0h1m4 0h1m4 0h1m4 0h1m4 0h1m4 0h1m4 0h1m4 0h1m4 0h1m4 0h1m4 0h1m4 0h1m4 0h1m4 0h1m4 0h1m4 0h1m4 0h1m4 0h1m4 0h1m4 0h1m4 0h1m4 0h1m4 0h1m4 0h1m4 0h1m4 0h1m4 0h1m4 0h1m4 0h1m4 0h1m4 0h1m4 0h1m4 0h1m4 0h1m4 0h1m4 0h1m4 0h1m4 0h1m4 0h1m4 0h1m4 0h1m4 0h1m4 0h1m4 0h1m4 0h1m4 0h1m4 0h1 M5 627.5h1m4 0h1m4 0h1m4 0h1m4 0h1m4 0h1m4 0h1m4 0h1m4 0h1m4 0h1m4 0h1m4 0h1m4 0h1m4 0h1m4 0h1m4 0h1m4 0h1m4 0h1m4 0h1m4 0h1m4 0h1m4 0h1m4 0h1m4 0h1m4 0h1m4 0h1m4 0h1m4 0h1m4 0h1m4 0h1m4 0h1m4 0h1m4 0h1m4 0h1m4 0h1m4 0h1m4 0h1m4 0h1m4 0h1m4 0h1m4 0h1m4 0h1m4 0h1m4 0h1m4 0h1m4 0h1m4 0h1m4 0h1m4 0h1m4 0h1m4 0h1m4 0h1m4 0h1m4 0h1m4 0h1m4 0h1m4 0h1m4 0h1m4 0h1m4 0h1m4 0h1m4 0h1m4 0h1m4 0h1m4 0h1m4 0h1m4 0h1m4 0h1m4 0h1m4 0h1m4 0h1m4 0h1m4 0h1m4 0h1m4 0h1m4 0h1m4 0h1m4 0h1m4 0h1m4 0h1m4 0h1m4 0h1m4 0h1m4 0h1m4 0h1m4 0h1m4 0h1m4 0h1m4 0h1m4 0h1m4 0h1m4 0h1m4 0h1m4 0h1m4 0h1m4 0h1m4 0h1m4 0h1m4 0h1m4 0h1m4 0h1m4 0h1m4 0h1m4 0h1m4 0h1m4 0h1m4 0h1m4 0h1m4 0h1m4 0h1m4 0h1m4 0h1m4 0h1m4 0h1m4 0h1m4 0h1m4 0h1m4 0h1m4 0h1m4 0h1m4 0h1m4 0h1m4 0h1m4 0h1m4 0h1m4 0h1m4 0h1m4 0h1m4 0h1m4 0h1m4 0h1m4 0h1m4 0h1m4 0h1m4 0h1m4 0h1m4 0h1m4 0h1m4 0h1m4 0h1m4 0h1m4 0h1m4 0h1m4 0h1m4 0h1m4 0h1m4 0h1m4 0h1m4 0h1m4 0h1m4 0h1m4 0h1m4 0h1m4 0h1m4 0h1m4 0h1m4 0h1m4 0h1m4 0h1m4 0h1m4 0h1m4 0h1m4 0h1m4 0h1m4 0h1m4 0h1m4 0h1m4 0h1m4 0h1m4 0h1m4 0h1m4 0h1m4 0h1m4 0h1m4 0h1m4 0h1m4 0h1m4 0h1m4 0h1m4 0h1m4 0h1m4 0h1m4 0h1m4 0h1m4 0h1m4 0h1m4 0h1m4 0h1m4 0h1m4 0h1m4 0h1m4 0h1m4 0h1m4 0h1m4 0h1m4 0h1m4 0h1m4 0h1m4 0h1m4 0h1m4 0h1m4 0h1m4 0h1m4 0h1m4 0h1m4 0h1m4 0h1m4 0h1m4 0h1m4 0h1m4 0h1m4 0h1m4 0h1m4 0h1m4 0h1m4 0h1m4 0h1m4 0h1m4 0h1m4 0h1m4 0h1m4 0h1m4 0h1m4 0h1m4 0h1m4 0h1m4 0h1m4 0h1m4 0h1m4 0h1m4 0h1m4 0h1m4 0h1m4 0h1m4 0h1m4 0h1m4 0h1m4 0h1m4 0h1m4 0h1m4 0h1m4 0h1m4 0h1 M5 672.5h1m4 0h1m4 0h1m4 0h1m4 0h1m4 0h1m4 0h1m4 0h1m4 0h1m4 0h1m4 0h1m4 0h1m4 0h1m4 0h1m4 0h1m4 0h1m4 0h1m4 0h1m4 0h1m4 0h1m4 0h1m4 0h1m4 0h1m4 0h1m4 0h1m4 0h1m4 0h1m4 0h1m4 0h1m4 0h1m4 0h1m4 0h1m4 0h1m4 0h1m4 0h1m4 0h1m4 0h1m4 0h1m4 0h1m4 0h1m4 0h1m4 0h1m4 0h1m4 0h1m4 0h1m4 0h1m4 0h1m4 0h1m4 0h1m4 0h1m4 0h1m4 0h1m4 0h1m4 0h1m4 0h1m4 0h1m4 0h1m4 0h1m4 0h1m4 0h1m4 0h1m4 0h1m4 0h1m4 0h1m4 0h1m4 0h1m4 0h1m4 0h1m4 0h1m4 0h1m4 0h1m4 0h1m4 0h1m4 0h1m4 0h1m4 0h1m4 0h1m4 0h1m4 0h1m4 0h1m4 0h1m4 0h1m4 0h1m4 0h1m4 0h1m4 0h1m4 0h1m4 0h1m4 0h1m4 0h1m4 0h1m4 0h1m4 0h1m4 0h1m4 0h1m4 0h1m4 0h1m4 0h1m4 0h1m4 0h1m4 0h1m4 0h1m4 0h1m4 0h1m4 0h1m4 0h1m4 0h1m4 0h1m4 0h1m4 0h1m4 0h1m4 0h1m4 0h1m4 0h1m4 0h1m4 0h1m4 0h1m4 0h1m4 0h1m4 0h1m4 0h1m4 0h1m4 0h1m4 0h1m4 0h1m4 0h1m4 0h1m4 0h1m4 0h1m4 0h1m4 0h1m4 0h1m4 0h1m4 0h1m4 0h1m4 0h1m4 0h1m4 0h1m4 0h1m4 0h1m4 0h1m4 0h1m4 0h1m4 0h1m4 0h1m4 0h1m4 0h1m4 0h1m4 0h1m4 0h1m4 0h1m4 0h1m4 0h1m4 0h1m4 0h1m4 0h1m4 0h1m4 0h1m4 0h1m4 0h1m4 0h1m4 0h1m4 0h1m4 0h1m4 0h1m4 0h1m4 0h1m4 0h1m4 0h1m4 0h1m4 0h1m4 0h1m4 0h1m4 0h1m4 0h1m4 0h1m4 0h1m4 0h1m4 0h1m4 0h1m4 0h1m4 0h1m4 0h1m4 0h1m4 0h1m4 0h1m4 0h1m4 0h1m4 0h1m4 0h1m4 0h1m4 0h1m4 0h1m4 0h1m4 0h1m4 0h1m4 0h1m4 0h1m4 0h1m4 0h1m4 0h1m4 0h1m4 0h1m4 0h1m4 0h1m4 0h1m4 0h1m4 0h1m4 0h1m4 0h1m4 0h1m4 0h1m4 0h1m4 0h1m4 0h1m4 0h1m4 0h1m4 0h1m4 0h1m4 0h1m4 0h1m4 0h1m4 0h1m4 0h1m4 0h1m4 0h1m4 0h1m4 0h1m4 0h1m4 0h1m4 0h1m4 0h1m4 0h1m4 0h1m4 0h1m4 0h1m4 0h1m4 0h1m4 0h1m4 0h1m4 0h1m4 0h1m4 0h1 M10 155.5h1m24 0h1m24 0h1m24 0h1m24 0h1m24 0h1m24 0h1m24 0h1m24 0h1m24 0h1m24 0h1m24 0h1m24 0h1m24 0h1m24 0h1m24 0h1m24 0h1m24 0h1m24 0h1m24 0h1m24 0h1m24 0h1m24 0h1m24 0h1m24 0h1m24 0h1m24 0h1m24 0h1m24 0h1m24 0h1m24 0h1m24 0h1m24 0h1m24 0h1m24 0h1 M10 192.5h1m24 0h1m24 0h1m24 0h1m24 0h1m24 0h1m24 0h1m24 0h1m24 0h1m24 0h1m24 0h1m24 0h1m24 0h1m24 0h1m24 0h1m24 0h1m24 0h1m24 0h1m24 0h1m24 0h1m24 0h1m24 0h1m24 0h1m24 0h1m24 0h1m24 0h1m24 0h1m24 0h1m24 0h1m24 0h1m24 0h1m24 0h1m24 0h1m24 0h1m24 0h1 M10 230.5h1m24 0h1m24 0h1m24 0h1m24 0h1m24 0h1m24 0h1m24 0h1m24 0h1m24 0h1m24 0h1m24 0h1m24 0h1m24 0h1m24 0h1m24 0h1m24 0h1m24 0h1m24 0h1m24 0h1m24 0h1m24 0h1m24 0h1m24 0h1m24 0h1m24 0h1m24 0h1m24 0h1m24 0h1m24 0h1m24 0h1m24 0h1m24 0h1m24 0h1m24 0h1 M10 267.5h1m24 0h1m24 0h1m24 0h1m24 0h1m24 0h1m24 0h1m24 0h1m24 0h1m24 0h1m24 0h1m24 0h1m24 0h1m24 0h1m24 0h1m24 0h1m24 0h1m24 0h1m24 0h1m24 0h1m24 0h1m24 0h1m24 0h1m24 0h1m24 0h1m24 0h1m24 0h1m24 0h1m24 0h1m24 0h1m24 0h1m24 0h1m24 0h1m24 0h1m24 0h1 M10 305.5h1m24 0h1m24 0h1m24 0h1m24 0h1m24 0h1m24 0h1m24 0h1m24 0h1m24 0h1m24 0h1m24 0h1m24 0h1m24 0h1m24 0h1m24 0h1m24 0h1m24 0h1m24 0h1m24 0h1m24 0h1m24 0h1m24 0h1m24 0h1m24 0h1m24 0h1m24 0h1m24 0h1m24 0h1m24 0h1m24 0h1m24 0h1m24 0h1m24 0h1m24 0h1 M10 342.5h1m24 0h1m24 0h1m24 0h1m24 0h1m24 0h1m24 0h1m24 0h1m24 0h1m24 0h1m24 0h1m24 0h1m24 0h1m24 0h1m24 0h1m24 0h1m24 0h1m24 0h1m24 0h1m24 0h1m24 0h1m24 0h1m24 0h1m24 0h1m24 0h1m24 0h1m24 0h1m24 0h1m24 0h1m24 0h1m24 0h1m24 0h1m24 0h1m24 0h1m24 0h1 M10 380.5h1m24 0h1m24 0h1m24 0h1m24 0h1m24 0h1m24 0h1m24 0h1m24 0h1m24 0h1m24 0h1m24 0h1m24 0h1m24 0h1m24 0h1m24 0h1m24 0h1m24 0h1m24 0h1m24 0h1m24 0h1m24 0h1m24 0h1m24 0h1m24 0h1m24 0h1m24 0h1m24 0h1m24 0h1m24 0h1m24 0h1m24 0h1m24 0h1m24 0h1m24 0h1 M10 417.5h1m24 0h1m24 0h1m24 0h1m24 0h1m24 0h1m24 0h1m24 0h1m24 0h1m24 0h1m24 0h1m24 0h1m24 0h1m24 0h1m24 0h1m24 0h1m24 0h1m24 0h1m24 0h1m24 0h1m24 0h1m24 0h1m24 0h1m24 0h1m24 0h1m24 0h1m24 0h1m24 0h1m24 0h1m24 0h1m24 0h1m24 0h1m24 0h1m24 0h1m24 0h1 M10 455.5h1m24 0h1m24 0h1m24 0h1m24 0h1m24 0h1m24 0h1m24 0h1m24 0h1m24 0h1m24 0h1m24 0h1m24 0h1m24 0h1m24 0h1m24 0h1m24 0h1m24 0h1m24 0h1m24 0h1m24 0h1m24 0h1m24 0h1m24 0h1m24 0h1m24 0h1m24 0h1m24 0h1m24 0h1m24 0h1m24 0h1m24 0h1m24 0h1m24 0h1m24 0h1 M10 492.5h1m24 0h1m24 0h1m24 0h1m24 0h1m24 0h1m24 0h1m24 0h1m24 0h1m24 0h1m24 0h1m24 0h1m24 0h1m24 0h1m24 0h1m24 0h1m24 0h1m24 0h1m24 0h1m24 0h1m24 0h1m24 0h1m24 0h1m24 0h1m24 0h1m24 0h1m24 0h1m24 0h1m24 0h1m24 0h1m24 0h1m24 0h1m24 0h1m24 0h1m24 0h1 M10 529.5h1m24 0h1m24 0h1m24 0h1m24 0h1m24 0h1m24 0h1m24 0h1m24 0h1m24 0h1m24 0h1m24 0h1m24 0h1m24 0h1m24 0h1m24 0h1m24 0h1m24 0h1m24 0h1m24 0h1m24 0h1m24 0h1m24 0h1m24 0h1m24 0h1m24 0h1m24 0h1m24 0h1m24 0h1m24 0h1m24 0h1m24 0h1m24 0h1m24 0h1m24 0h1 M10 605.5h1m24 0h1m24 0h1m24 0h1m24 0h1m24 0h1m24 0h1m24 0h1m24 0h1m24 0h1m24 0h1m24 0h1m24 0h1m24 0h1m24 0h1m24 0h1m24 0h1m24 0h1m24 0h1m24 0h1m24 0h1m24 0h1m24 0h1m24 0h1m24 0h1m24 0h1m24 0h1m24 0h1m24 0h1m24 0h1m24 0h1m24 0h1m24 0h1m24 0h1m24 0h1 M10 650.5h1m24 0h1m24 0h1m24 0h1m24 0h1m24 0h1m24 0h1m24 0h1m24 0h1m24 0h1m24 0h1m24 0h1m24 0h1m24 0h1m24 0h1m24 0h1m24 0h1m24 0h1m24 0h1m24 0h1m24 0h1m24 0h1m24 0h1m24 0h1m24 0h1m24 0h1m24 0h1m24 0h1m24 0h1m24 0h1m24 0h1m24 0h1m24 0h1m24 0h1m24 0h1 M10 695.5h1m24 0h1m24 0h1m24 0h1m24 0h1m24 0h1m24 0h1m24 0h1m24 0h1m24 0h1m24 0h1m24 0h1m24 0h1m24 0h1m24 0h1m24 0h1m24 0h1m24 0h1m24 0h1m24 0h1m24 0h1m24 0h1m24 0h1m24 0h1m24 0h1m24 0h1m24 0h1m24 0h1m24 0h1m24 0h1m24 0h1m24 0h1m24 0h1m24 0h1m24 0h1 M10.5 132v1m0 3v1m0 3v1m0 3v1m0 3v1m0 3v1m0 3v1m0 3v1m0 3v1m0 3v1m0 3v1m0 3v1m0 3v1m0 3v1m0 3v1m0 3v1m0 3v1m0 3v1m0 3v1m0 3v1m0 3v1m0 3v1m0 3v1m0 3v1m0 3v1m0 3v1m0 3v1m0 3v1m0 3v1m0 3v1m0 3v1m0 3v1m0 3v1m0 3v1m0 3v1m0 3v1m0 3v1m0 3v1m0 3v1m0 3v1m0 3v1m0 3v1m0 3v1m0 3v1m0 3v1m0 3v1m0 3v1m0 3v1m0 3v1m0 3v1m0 3v1m0 3v1m0 3v1m0 3v1m0 3v1m0 3v1m0 3v1m0 3v1m0 3v1m0 3v1m0 3v1m0 3v1m0 3v1m0 3v1m0 3v1m0 3v1m0 3v1m0 3v1m0 3v1m0 3v1m0 3v1m0 3v1m0 3v1m0 3v1m0 3v1m0 3v1m0 3v1m0 3v1m0 3v1m0 3v1m0 3v1m0 3v1m0 3v1m0 3v1m0 3v1m0 3v1m0 3v1m0 3v1m0 3v1m0 3v1m0 3v1m0 3v1m0 3v1m0 3v1m0 3v1m0 3v1m0 3v1m0 3v1m0 3v1m0 3v1m0 3v1m0 3v1m0 3v1m0 3v1m0 3v1m0 3v1m0 3v1m0 3v1m0 3v1m0 3v1m0 3v1m0 3v1m0 3v1m0 3v1m0 3v1m0 3v1m0 3v1m0 3v1m0 3v1m0 3v1m0 3v1m0 3v1m0 3v1m0 3v1m0 3v1m0 3v1m0 3v1m0 3v1m0 3v1m0 3v1m0 3v1m0 3v1m0 3v1m0 3v1m0 3v1m0 3v1m0 3v1m0 3v1m0 3v1m0 3v1m0 3v1m0 3v1m0 3v1m0 3v1m0 3v1m0 3v1m0 3v1 M120.5 132v1m0 3v1m0 3v1m0 3v1m0 3v1m0 3v1m0 3v1m0 3v1m0 3v1m0 3v1m0 3v1m0 3v1m0 3v1m0 3v1m0 3v1m0 3v1m0 3v1m0 3v1m0 3v1m0 3v1m0 3v1m0 3v1m0 3v1m0 3v1m0 3v1m0 3v1m0 3v1m0 3v1m0 3v1m0 3v1m0 3v1m0 3v1m0 3v1m0 3v1m0 3v1m0 3v1m0 3v1m0 3v1m0 3v1m0 3v1m0 3v1m0 3v1m0 3v1m0 3v1m0 3v1m0 3v1m0 3v1m0 3v1m0 3v1m0 3v1m0 3v1m0 3v1m0 3v1m0 3v1m0 3v1m0 3v1m0 3v1m0 3v1m0 3v1m0 3v1m0 3v1m0 3v1m0 3v1m0 3v1m0 3v1m0 3v1m0 3v1m0 3v1m0 3v1m0 3v1m0 3v1m0 3v1m0 3v1m0 3v1m0 3v1m0 3v1m0 3v1m0 3v1m0 3v1m0 3v1m0 3v1m0 3v1m0 3v1m0 3v1m0 3v1m0 3v1m0 3v1m0 3v1m0 3v1m0 3v1m0 3v1m0 3v1m0 3v1m0 3v1m0 3v1m0 3v1m0 3v1m0 3v1m0 3v1m0 3v1m0 3v1m0 3v1m0 3v1m0 3v1m0 3v1m0 3v1m0 3v1m0 3v1m0 3v1m0 3v1m0 3v1m0 3v1m0 3v1m0 3v1m0 3v1m0 3v1m0 3v1m0 3v1m0 3v1m0 3v1m0 3v1m0 3v1m0 3v1m0 3v1m0 3v1m0 3v1m0 3v1m0 3v1m0 3v1m0 3v1m0 3v1m0 3v1m0 3v1m0 3v1m0 3v1m0 3v1m0 3v1m0 3v1m0 3v1m0 3v1m0 3v1m0 3v1m0 3v1m0 3v1m0 3v1m0 3v1m0 3v1 M230.5 132v1m0 3v1m0 3v1m0 3v1m0 3v1m0 3v1m0 3v1m0 3v1m0 3v1m0 3v1m0 3v1m0 3v1m0 3v1m0 3v1m0 3v1m0 3v1m0 3v1m0 3v1m0 3v1m0 3v1m0 3v1m0 3v1m0 3v1m0 3v1m0 3v1m0 3v1m0 3v1m0 3v1m0 3v1m0 3v1m0 3v1m0 3v1m0 3v1m0 3v1m0 3v1m0 3v1m0 3v1m0 3v1m0 3v1m0 3v1m0 3v1m0 3v1m0 3v1m0 3v1m0 3v1m0 3v1m0 3v1m0 3v1m0 3v1m0 3v1m0 3v1m0 3v1m0 3v1m0 3v1m0 3v1m0 3v1m0 3v1m0 3v1m0 3v1m0 3v1m0 3v1m0 3v1m0 3v1m0 3v1m0 3v1m0 3v1m0 3v1m0 3v1m0 3v1m0 3v1m0 3v1m0 3v1m0 3v1m0 3v1m0 3v1m0 3v1m0 3v1m0 3v1m0 3v1m0 3v1m0 3v1m0 3v1m0 3v1m0 3v1m0 3v1m0 3v1m0 3v1m0 3v1m0 3v1m0 3v1m0 3v1m0 3v1m0 3v1m0 3v1m0 3v1m0 3v1m0 3v1m0 3v1m0 3v1m0 3v1m0 3v1m0 3v1m0 3v1m0 3v1m0 3v1m0 3v1m0 3v1m0 3v1m0 3v1m0 3v1m0 3v1m0 3v1m0 3v1m0 3v1m0 3v1m0 3v1m0 3v1m0 3v1m0 3v1m0 3v1m0 3v1m0 3v1m0 3v1m0 3v1m0 3v1m0 3v1m0 3v1m0 3v1m0 3v1m0 3v1m0 3v1m0 3v1m0 3v1m0 3v1m0 3v1m0 3v1m0 3v1m0 3v1m0 3v1m0 3v1m0 3v1m0 3v1m0 3v1m0 3v1m0 3v1m0 3v1m0 3v1 M335.5 132v1m0 3v1m0 3v1m0 3v1m0 3v1m0 3v1m0 3v1m0 3v1m0 3v1m0 3v1m0 3v1m0 3v1m0 3v1m0 3v1m0 3v1m0 3v1m0 3v1m0 3v1m0 3v1m0 3v1m0 3v1m0 3v1m0 3v1m0 3v1m0 3v1m0 3v1m0 3v1m0 3v1m0 3v1m0 3v1m0 3v1m0 3v1m0 3v1m0 3v1m0 3v1m0 3v1m0 3v1m0 3v1m0 3v1m0 3v1m0 3v1m0 3v1m0 3v1m0 3v1m0 3v1m0 3v1m0 3v1m0 3v1m0 3v1m0 3v1m0 3v1m0 3v1m0 3v1m0 3v1m0 3v1m0 3v1m0 3v1m0 3v1m0 3v1m0 3v1m0 3v1m0 3v1m0 3v1m0 3v1m0 3v1m0 3v1m0 3v1m0 3v1m0 3v1m0 3v1m0 3v1m0 3v1m0 3v1m0 3v1m0 3v1m0 3v1m0 3v1m0 3v1m0 3v1m0 3v1m0 3v1m0 3v1m0 3v1m0 3v1m0 3v1m0 3v1m0 3v1m0 3v1m0 3v1m0 3v1m0 3v1m0 3v1m0 3v1m0 3v1m0 3v1m0 3v1m0 3v1m0 3v1m0 3v1m0 3v1m0 3v1m0 3v1m0 3v1m0 3v1m0 3v1m0 3v1m0 3v1m0 3v1m0 3v1m0 3v1m0 3v1m0 3v1m0 3v1m0 3v1m0 3v1m0 3v1m0 3v1m0 3v1m0 3v1m0 3v1m0 3v1m0 3v1m0 3v1m0 3v1m0 3v1m0 3v1m0 3v1m0 3v1m0 3v1m0 3v1m0 3v1m0 3v1m0 3v1m0 3v1m0 3v1m0 3v1m0 3v1m0 3v1m0 3v1m0 3v1m0 3v1m0 3v1m0 3v1m0 3v1m0 3v1m0 3v1m0 3v1 M450.5 132v1m0 3v1m0 3v1m0 3v1m0 3v1m0 3v1m0 3v1m0 3v1m0 3v1m0 3v1m0 3v1m0 3v1m0 3v1m0 3v1m0 3v1m0 3v1m0 3v1m0 3v1m0 3v1m0 3v1m0 3v1m0 3v1m0 3v1m0 3v1m0 3v1m0 3v1m0 3v1m0 3v1m0 3v1m0 3v1m0 3v1m0 3v1m0 3v1m0 3v1m0 3v1m0 3v1m0 3v1m0 3v1m0 3v1m0 3v1m0 3v1m0 3v1m0 3v1m0 3v1m0 3v1m0 3v1m0 3v1m0 3v1m0 3v1m0 3v1m0 3v1m0 3v1m0 3v1m0 3v1m0 3v1m0 3v1m0 3v1m0 3v1m0 3v1m0 3v1m0 3v1m0 3v1m0 3v1m0 3v1m0 3v1m0 3v1m0 3v1m0 3v1m0 3v1m0 3v1m0 3v1m0 3v1m0 3v1m0 3v1m0 3v1m0 3v1m0 3v1m0 3v1m0 3v1m0 3v1m0 3v1m0 3v1m0 3v1m0 3v1m0 3v1m0 3v1m0 3v1m0 3v1m0 3v1m0 3v1m0 3v1m0 3v1m0 3v1m0 3v1m0 3v1m0 3v1m0 3v1m0 3v1m0 3v1m0 3v1m0 3v1m0 3v1m0 3v1m0 3v1m0 3v1m0 3v1m0 3v1m0 3v1m0 3v1m0 3v1m0 3v1m0 3v1m0 3v1m0 3v1m0 3v1m0 3v1m0 3v1m0 3v1m0 3v1m0 3v1m0 3v1m0 3v1m0 3v1m0 3v1m0 3v1m0 3v1m0 3v1m0 3v1m0 3v1m0 3v1m0 3v1m0 3v1m0 3v1m0 3v1m0 3v1m0 3v1m0 3v1m0 3v1m0 3v1m0 3v1m0 3v1m0 3v1m0 3v1m0 3v1m0 3v1m0 3v1m0 3v1 M560.5 132v1m0 3v1m0 3v1m0 3v1m0 3v1m0 3v1m0 3v1m0 3v1m0 3v1m0 3v1m0 3v1m0 3v1m0 3v1m0 3v1m0 3v1m0 3v1m0 3v1m0 3v1m0 3v1m0 3v1m0 3v1m0 3v1m0 3v1m0 3v1m0 3v1m0 3v1m0 3v1m0 3v1m0 3v1m0 3v1m0 3v1m0 3v1m0 3v1m0 3v1m0 3v1m0 3v1m0 3v1m0 3v1m0 3v1m0 3v1m0 3v1m0 3v1m0 3v1m0 3v1m0 3v1m0 3v1m0 3v1m0 3v1m0 3v1m0 3v1m0 3v1m0 3v1m0 3v1m0 3v1m0 3v1m0 3v1m0 3v1m0 3v1m0 3v1m0 3v1m0 3v1m0 3v1m0 3v1m0 3v1m0 3v1m0 3v1m0 3v1m0 3v1m0 3v1m0 3v1m0 3v1m0 3v1m0 3v1m0 3v1m0 3v1m0 3v1m0 3v1m0 3v1m0 3v1m0 3v1m0 3v1m0 3v1m0 3v1m0 3v1m0 3v1m0 3v1m0 3v1m0 3v1m0 3v1m0 3v1m0 3v1m0 3v1m0 3v1m0 3v1m0 3v1m0 3v1m0 3v1m0 3v1m0 3v1m0 3v1m0 3v1m0 3v1m0 3v1m0 3v1m0 3v1m0 3v1m0 3v1m0 3v1m0 3v1m0 3v1m0 3v1m0 3v1m0 3v1m0 3v1m0 3v1m0 3v1m0 3v1m0 3v1m0 3v1m0 3v1m0 3v1m0 3v1m0 3v1m0 3v1m0 3v1m0 3v1m0 3v1m0 3v1m0 3v1m0 3v1m0 3v1m0 3v1m0 3v1m0 3v1m0 3v1m0 3v1m0 3v1m0 3v1m0 3v1m0 3v1m0 3v1m0 3v1m0 3v1m0 3v1m0 3v1m0 3v1m0 3v1 M665.5 132v1m0 3v1m0 3v1m0 3v1m0 3v1m0 3v1m0 3v1m0 3v1m0 3v1m0 3v1m0 3v1m0 3v1m0 3v1m0 3v1m0 3v1m0 3v1m0 3v1m0 3v1m0 3v1m0 3v1m0 3v1m0 3v1m0 3v1m0 3v1m0 3v1m0 3v1m0 3v1m0 3v1m0 3v1m0 3v1m0 3v1m0 3v1m0 3v1m0 3v1m0 3v1m0 3v1m0 3v1m0 3v1m0 3v1m0 3v1m0 3v1m0 3v1m0 3v1m0 3v1m0 3v1m0 3v1m0 3v1m0 3v1m0 3v1m0 3v1m0 3v1m0 3v1m0 3v1m0 3v1m0 3v1m0 3v1m0 3v1m0 3v1m0 3v1m0 3v1m0 3v1m0 3v1m0 3v1m0 3v1m0 3v1m0 3v1m0 3v1m0 3v1m0 3v1m0 3v1m0 3v1m0 3v1m0 3v1m0 3v1m0 3v1m0 3v1m0 3v1m0 3v1m0 3v1m0 3v1m0 3v1m0 3v1m0 3v1m0 3v1m0 3v1m0 3v1m0 3v1m0 3v1m0 3v1m0 3v1m0 3v1m0 3v1m0 3v1m0 3v1m0 3v1m0 3v1m0 3v1m0 3v1m0 3v1m0 3v1m0 3v1m0 3v1m0 3v1m0 3v1m0 3v1m0 3v1m0 3v1m0 3v1m0 3v1m0 3v1m0 3v1m0 3v1m0 3v1m0 3v1m0 3v1m0 3v1m0 3v1m0 3v1m0 3v1m0 3v1m0 3v1m0 3v1m0 3v1m0 3v1m0 3v1m0 3v1m0 3v1m0 3v1m0 3v1m0 3v1m0 3v1m0 3v1m0 3v1m0 3v1m0 3v1m0 3v1m0 3v1m0 3v1m0 3v1m0 3v1m0 3v1m0 3v1m0 3v1m0 3v1m0 3v1m0 3v1m0 3v1 M775.5 132v1m0 3v1m0 3v1m0 3v1m0 3v1m0 3v1m0 3v1m0 3v1m0 3v1m0 3v1m0 3v1m0 3v1m0 3v1m0 3v1m0 3v1m0 3v1m0 3v1m0 3v1m0 3v1m0 3v1m0 3v1m0 3v1m0 3v1m0 3v1m0 3v1m0 3v1m0 3v1m0 3v1m0 3v1m0 3v1m0 3v1m0 3v1m0 3v1m0 3v1m0 3v1m0 3v1m0 3v1m0 3v1m0 3v1m0 3v1m0 3v1m0 3v1m0 3v1m0 3v1m0 3v1m0 3v1m0 3v1m0 3v1m0 3v1m0 3v1m0 3v1m0 3v1m0 3v1m0 3v1m0 3v1m0 3v1m0 3v1m0 3v1m0 3v1m0 3v1m0 3v1m0 3v1m0 3v1m0 3v1m0 3v1m0 3v1m0 3v1m0 3v1m0 3v1m0 3v1m0 3v1m0 3v1m0 3v1m0 3v1m0 3v1m0 3v1m0 3v1m0 3v1m0 3v1m0 3v1m0 3v1m0 3v1m0 3v1m0 3v1m0 3v1m0 3v1m0 3v1m0 3v1m0 3v1m0 3v1m0 3v1m0 3v1m0 3v1m0 3v1m0 3v1m0 3v1m0 3v1m0 3v1m0 3v1m0 3v1m0 3v1m0 3v1m0 3v1m0 3v1m0 3v1m0 3v1m0 3v1m0 3v1m0 3v1m0 3v1m0 3v1m0 3v1m0 3v1m0 3v1m0 3v1m0 3v1m0 3v1m0 3v1m0 3v1m0 3v1m0 3v1m0 3v1m0 3v1m0 3v1m0 3v1m0 3v1m0 3v1m0 3v1m0 3v1m0 3v1m0 3v1m0 3v1m0 3v1m0 3v1m0 3v1m0 3v1m0 3v1m0 3v1m0 3v1m0 3v1m0 3v1m0 3v1m0 3v1m0 3v1m0 3v1m0 3v1m0 3v1 M880.5 132v1m0 3v1m0 3v1m0 3v1m0 3v1m0 3v1m0 3v1m0 3v1m0 3v1m0 3v1m0 3v1m0 3v1m0 3v1m0 3v1m0 3v1m0 3v1m0 3v1m0 3v1m0 3v1m0 3v1m0 3v1m0 3v1m0 3v1m0 3v1m0 3v1m0 3v1m0 3v1m0 3v1m0 3v1m0 3v1m0 3v1m0 3v1m0 3v1m0 3v1m0 3v1m0 3v1m0 3v1m0 3v1m0 3v1m0 3v1m0 3v1m0 3v1m0 3v1m0 3v1m0 3v1m0 3v1m0 3v1m0 3v1m0 3v1m0 3v1m0 3v1m0 3v1m0 3v1m0 3v1m0 3v1m0 3v1m0 3v1m0 3v1m0 3v1m0 3v1m0 3v1m0 3v1m0 3v1m0 3v1m0 3v1m0 3v1m0 3v1m0 3v1m0 3v1m0 3v1m0 3v1m0 3v1m0 3v1m0 3v1m0 3v1m0 3v1m0 3v1m0 3v1m0 3v1m0 3v1m0 3v1m0 3v1m0 3v1m0 3v1m0 3v1m0 3v1m0 3v1m0 3v1m0 3v1m0 3v1m0 3v1m0 3v1m0 3v1m0 3v1m0 3v1m0 3v1m0 3v1m0 3v1m0 3v1m0 3v1m0 3v1m0 3v1m0 3v1m0 3v1m0 3v1m0 3v1m0 3v1m0 3v1m0 3v1m0 3v1m0 3v1m0 3v1m0 3v1m0 3v1m0 3v1m0 3v1m0 3v1m0 3v1m0 3v1m0 3v1m0 3v1m0 3v1m0 3v1m0 3v1m0 3v1m0 3v1m0 3v1m0 3v1m0 3v1m0 3v1m0 3v1m0 3v1m0 3v1m0 3v1m0 3v1m0 3v1m0 3v1m0 3v1m0 3v1m0 3v1m0 3v1m0 3v1m0 3v1m0 3v1m0 3v1m0 3v1m0 3v1" stroke="#b8b8b8" stroke-width="1" fill="none" shape-rendering="crispEdges"/>
<svg x="0" y="132" width="1226" height="434" viewBox="0 132 1226 434" overflow="hidden">
<polyline points="145,468.2 148,472.2 151,476.1 154,479.9 157,483.6 160,487.3 163,490.8 166,494.3 169,497.7 172,501.1 175,504.3 178,507.5 181,510.6 184,513.6 187,516.5 190,519.4 193,522.1 196,524.8 199,527.5 202,530.0 205,532.5 208,534.9 211,537.3 214,539.6 217,541.8 220,543.9 223,545.9 226,547.9 229,549.9 232,551.7 235,553.5 238,555.2 241,556.9 244,558.5 247,560.0 250,561.4 253,562.8 256,564.2 259,565.4 262,566.6 265,567.8 268,568.9 271,569.9 274,570.9 277,571.8 280,572.6 283,573.4 286,574.2 289,574.8 292,575.5 295,576.0 298,576.5 301,577.0 304,577.4 307,577.7 310,578.0 313,578.3 316,578.5 319,578.6 322,578.7 325,578.8 328,578.8 331,578.7 334,578.6 337,578.5 340,578.3 343,578.0 346,577.7 349,577.4 352,577.0 355,576.6 358,576.2 361,575.7 364,575.1 367,574.5 370,573.9 373,573.2 376,572.5 379,571.8 382,571.0 385,570.2 388,569.3 391,568.4 394,567.5 397,566.5 400,565.5 403,564.5 406,563.4 409,562.4 412,561.2 415,560.1 418,558.9 421,557.6 424,556.4 427,555.1 430,553.8 433,552.5 436,551.1 439,549.7 442,548.3 445,546.8 448,545.4 451,543.9 454,542.3 457,540.8 460,539.2 463,537.6 466,536.0 469,534.4 472,532.8 475,531.1 478,529.4 481,527.7 484,526.0 487,524.2 490,522.5 493,520.7 496,518.9 499,517.1 502,515.3 505,513.4 508,511.6 511,509.7 514,507.8 517,506.0 520,504.1 523,502.2 526,500.3 529,498.3 532,496.4 535,494.5 538,492.5 541,490.6 544,488.6 547,486.6 550,484.7 553,482.7 556,480.7 559,478.7 562,476.7 565,474.8 568,472.8 571,470.8 574,468.8 577,466.8 580,464.8 583,462.8 586,460.9 589,458.9 592,456.9 595,454.9 598,453.0 601,451.0 604,449.0 607,447.1 610,445.2 613,443.2 616,441.3 619,439.4 622,437.5 625,435.6 628,433.7 631,431.8 634,429.9 637,428.1 640,426.2 643,424.4 646,422.6 649,420.8 652,419.0 655,417.3 658,415.5 661,413.8 664,412.1 667,410.4 670,408.7 673,407.0 676,405.4 679,403.8 682,402.2 685,400.6 688,399.1 691,397.5 694,396.0 697,394.5 700,393.1 703,391.7 706,390.3 709,388.9 712,387.5 715,386.2 718,384.9 721,383.6 724,382.4 727,381.2 730,380.0 733,378.9 736,377.8 739,376.7 742,375.7 745,374.6 748,373.7 751,372.7 754,371.8 757,370.9 760,370.1 763,369.3 766,368.6 769,367.8 772,367.2 775,366.5 778,365.9 781,365.4 784,364.8 787,364.4 790,363.9 793,363.5 796,363.2 799,362.9 802,362.6 805,362.4 808,362.3 811,362.1 814,362.1 817,362.0 820,362.1 823,362.2 826,362.3 829,362.5 832,362.7 835,363.0 838,363.3 841,363.7 844,364.1 847,364.6 850,365.1 853,365.7 856,366.4 859,367.1 862,367.9 865,368.7 868,369.6 871,370.5 874,371.5 877,372.6 880,373.7 883,374.9 886,376.2 889,377.5 892,378.8 895,380.3 896,380.8" fill="none" stroke="#ff0000" stroke-width="2.4"/>
<polyline points="145,424.4 148,428.4 151,432.3 154,436.1 157,439.8 160,443.5 163,447.0 166,450.5 169,453.9 172,457.3 175,460.5 178,463.7 181,466.8 184,469.8 187,472.7 190,475.6 193,478.3 196,481.0 199,483.7 202,486.2 205,488.7 208,491.1 211,493.5 214,495.8 217,498.0 220,500.1 223,502.1 226,504.1 229,506.1 232,507.9 235,509.7 238,511.4 241,513.1 244,514.7 247,516.2 250,517.6 253,519.0 256,520.4 259,521.6 262,522.8 265,524.0 268,525.1 271,526.1 274,527.1 277,528.0 280,528.8 283,529.6 286,530.4 289,531.0 292,531.7 295,532.2 298,532.7 301,533.2 304,533.6 307,533.9 310,534.2 313,534.5 316,534.7 319,534.8 322,534.9 325,535.0 328,535.0 331,534.9 334,534.8 337,534.7 340,534.5 343,534.2 346,533.9 349,533.6 352,533.2 355,532.8 358,532.4 361,531.9 364,531.3 367,530.7 370,530.1 373,529.4 376,528.7 379,528.0 382,527.2 385,526.4 388,525.5 391,524.6 394,523.7 397,522.7 400,521.7 403,520.7 406,519.6 409,518.6 412,517.4 415,516.3 418,515.1 421,513.8 424,512.6 427,511.3 430,510.0 433,508.7 436,507.3 439,505.9 442,504.5 445,503.0 448,501.6 451,500.1 454,498.5 457,497.0 460,495.4 463,493.8 466,492.2 469,490.6 472,489.0 475,487.3 478,485.6 481,483.9 484,482.2 487,480.4 490,478.7 493,476.9 496,475.1 499,473.3 502,471.5 505,469.6 508,467.8 511,465.9 514,464.0 517,462.2 520,460.3 523,458.4 526,456.5 529,454.5 532,452.6 535,450.7 538,448.7 541,446.8 544,444.8 547,442.8 550,440.9 553,438.9 556,436.9 559,434.9 562,432.9 565,431.0 568,429.0 571,427.0 574,425.0 577,423.0 580,421.0 583,419.0 586,417.1 589,415.1 592,413.1 595,411.1 598,409.2 601,407.2 604,405.2 607,403.3 610,401.4 613,399.4 616,397.5 619,395.6 622,393.7 625,391.8 628,389.9 631,388.0 634,386.1 637,384.3 640,382.4 643,380.6 646,378.8 649,377.0 652,375.2 655,373.5 658,371.7 661,370.0 664,368.3 667,366.6 670,364.9 673,363.2 676,361.6 679,360.0 682,358.4 685,356.8 688,355.3 691,353.7 694,352.2 697,350.7 700,349.3 703,347.9 706,346.5 709,345.1 712,343.7 715,342.4 718,341.1 721,339.8 724,338.6 727,337.4 730,336.2 733,335.1 736,334.0 739,332.9 742,331.9 745,330.8 748,329.9 751,328.9 754,328.0 757,327.1 760,326.3 763,325.5 766,324.8 769,324.0 772,323.4 775,322.7 778,322.1 781,321.6 784,321.0 787,320.6 790,320.1 793,319.7 796,319.4 799,319.1 802,318.8 805,318.6 808,318.5 811,318.3 814,318.3 817,318.2 820,318.3 823,318.4 826,318.5 829,318.7 832,318.9 835,319.2 838,319.5 841,319.9 844,320.3 847,320.8 850,321.3 853,321.9 856,322.6 859,323.3 862,324.1 865,324.9 868,325.8 871,326.7 874,327.7 877,328.8 880,329.9 883,331.1 886,332.4 889,333.7 892,335.0 895,336.5 896,337.0" fill="none" stroke="#a070e0" stroke-width="2.2"/>
<polyline points="145,380.6 148,384.6 151,388.5 154,392.3 157,396.0 160,399.7 163,403.2 166,406.7 169,410.1 172,413.5 175,416.7 178,419.9 181,423.0 184,426.0 187,428.9 190,431.8 193,434.5 196,437.2 199,439.9 202,442.4 205,444.9 208,447.3 211,449.7 214,452.0 217,454.2 220,456.3 223,458.3 226,460.3 229,462.3 232,464.1 235,465.9 238,467.6 241,469.3 244,470.9 247,472.4 250,473.8 253,475.2 256,476.6 259,477.8 262,479.0 265,480.2 268,481.3 271,482.3 274,483.3 277,484.2 280,485.0 283,485.8 286,486.6 289,487.2 292,487.9 295,488.4 298,488.9 301,489.4 304,489.8 307,490.1 310,490.4 313,490.7 316,490.9 319,491.0 322,491.1 325,491.2 328,491.2 331,491.1 334,491.0 337,490.9 340,490.7 343,490.4 346,490.1 349,489.8 352,489.4 355,489.0 358,488.6 361,488.1 364,487.5 367,486.9 370,486.3 373,485.6 376,484.9 379,484.2 382,483.4 385,482.6 388,481.7 391,480.8 394,479.9 397,478.9 400,477.9 403,476.9 406,475.8 409,474.8 412,473.6 415,472.5 418,471.3 421,470.0 424,468.8 427,467.5 430,466.2 433,464.9 436,463.5 439,462.1 442,460.7 445,459.2 448,457.8 451,456.3 454,454.7 457,453.2 460,451.6 463,450.0 466,448.4 469,446.8 472,445.2 475,443.5 478,441.8 481,440.1 484,438.4 487,436.6 490,434.9 493,433.1 496,431.3 499,429.5 502,427.7 505,425.8 508,424.0 511,422.1 514,420.2 517,418.4 520,416.5 523,414.6 526,412.7 529,410.7 532,408.8 535,406.9 538,404.9 541,403.0 544,401.0 547,399.0 550,397.1 553,395.1 556,393.1 559,391.1 562,389.1 565,387.2 568,385.2 571,383.2 574,381.2 577,379.2 580,377.2 583,375.2 586,373.3 589,371.3 592,369.3 595,367.3 598,365.4 601,363.4 604,361.4 607,359.5 610,357.6 613,355.6 616,353.7 619,351.8 622,349.9 625,348.0 628,346.1 631,344.2 634,342.3 637,340.5 640,338.6 643,336.8 646,335.0 649,333.2 652,331.4 655,329.7 658,327.9 661,326.2 664,324.5 667,322.8 670,321.1 673,319.4 676,317.8 679,316.2 682,314.6 685,313.0 688,311.5 691,309.9 694,308.4 697,306.9 700,305.5 703,304.1 706,302.7 709,301.3 712,299.9 715,298.6 718,297.3 721,296.0 724,294.8 727,293.6 730,292.4 733,291.3 736,290.2 739,289.1 742,288.1 745,287.0 748,286.1 751,285.1 754,284.2 757,283.3 760,282.5 763,281.7 766,281.0 769,280.2 772,279.6 775,278.9 778,278.3 781,277.8 784,277.2 787,276.8 790,276.3 793,275.9 796,275.6 799,275.3 802,275.0 805,274.8 808,274.7 811,274.5 814,274.5 817,274.4 820,274.5 823,274.6 826,274.7 829,274.9 832,275.1 835,275.4 838,275.7 841,276.1 844,276.5 847,277.0 850,277.5 853,278.1 856,278.8 859,279.5 862,280.3 865,281.1 868,282.0 871,282.9 874,283.9 877,285.0 880,286.1 883,287.3 886,288.6 889,289.9 892,291.2 895,292.7 896,293.2" fill="none" stroke="#ff8848" stroke-width="2.0"/>
<polyline points="145,293.0 148,297.0 151,300.9 154,304.7 157,308.4 160,312.1 163,315.6 166,319.1 169,322.5 172,325.9 175,329.1 178,332.3 181,335.4 184,338.4 187,341.3 190,344.2 193,346.9 196,349.6 199,352.3 202,354.8 205,357.3 208,359.7 211,362.1 214,364.4 217,366.6 220,368.7 223,370.7 226,372.7 229,374.7 232,376.5 235,378.3 238,380.0 241,381.7 244,383.3 247,384.8 250,386.2 253,387.6 256,389.0 259,390.2 262,391.4 265,392.6 268,393.7 271,394.7 274,395.7 277,396.6 280,397.4 283,398.2 286,399.0 289,399.6 292,400.3 295,400.8 298,401.3 301,401.8 304,402.2 307,402.5 310,402.8 313,403.1 316,403.3 319,403.4 322,403.5 325,403.6 328,403.6 331,403.5 334,403.4 337,403.3 340,403.1 343,402.8 346,402.5 349,402.2 352,401.8 355,401.4 358,401.0 361,400.5 364,399.9 367,399.3 370,398.7 373,398.0 376,397.3 379,396.6 382,395.8 385,395.0 388,394.1 391,393.2 394,392.3 397,391.3 400,390.3 403,389.3 406,388.2 409,387.2 412,386.0 415,384.9 418,383.7 421,382.4 424,381.2 427,379.9 430,378.6 433,377.3 436,375.9 439,374.5 442,373.1 445,371.6 448,370.2 451,368.7 454,367.1 457,365.6 460,364.0 463,362.4 466,360.8 469,359.2 472,357.6 475,355.9 478,354.2 481,352.5 484,350.8 487,349.0 490,347.3 493,345.5 496,343.7 499,341.9 502,340.1 505,338.2 508,336.4 511,334.5 514,332.6 517,330.8 520,328.9 523,327.0 526,325.1 529,323.1 532,321.2 535,319.3 538,317.3 541,315.4 544,313.4 547,311.4 550,309.5 553,307.5 556,305.5 559,303.5 562,301.5 565,299.6 568,297.6 571,295.6 574,293.6 577,291.6 580,289.6 583,287.6 586,285.7 589,283.7 592,281.7 595,279.7 598,277.8 601,275.8 604,273.8 607,271.9 610,270.0 613,268.0 616,266.1 619,264.2 622,262.3 625,260.4 628,258.5 631,256.6 634,254.7 637,252.9 640,251.0 643,249.2 646,247.4 649,245.6 652,243.8 655,242.1 658,240.3 661,238.6 664,236.9 667,235.2 670,233.5 673,231.8 676,230.2 679,228.6 682,227.0 685,225.4 688,223.9 691,222.3 694,220.8 697,219.3 700,217.9 703,216.5 706,215.1 709,213.7 712,212.3 715,211.0 718,209.7 721,208.4 724,207.2 727,206.0 730,204.8 733,203.7 736,202.6 739,201.5 742,200.5 745,199.4 748,198.5 751,197.5 754,196.6 757,195.7 760,194.9 763,194.1 766,193.4 769,192.6 772,192.0 775,191.3 778,190.7 781,190.2 784,189.6 787,189.2 790,188.7 793,188.3 796,188.0 799,187.7 802,187.4 805,187.2 808,187.1 811,186.9 814,186.9 817,186.8 820,186.9 823,187.0 826,187.1 829,187.3 832,187.5 835,187.8 838,188.1 841,188.5 844,188.9 847,189.4 850,189.9 853,190.5 856,191.2 859,191.9 862,192.7 865,193.5 868,194.4 871,195.3 874,196.3 877,197.4 880,198.5 883,199.7 886,201.0 889,202.3 892,203.6 895,205.1 896,205.6" fill="none" stroke="#ff8848" stroke-width="2.0"/>
<polyline points="145,249.2 148,253.2 151,257.1 154,260.9 157,264.6 160,268.3 163,271.8 166,275.3 169,278.7 172,282.1 175,285.3 178,288.5 181,291.6 184,294.6 187,297.5 190,300.4 193,303.1 196,305.8 199,308.5 202,311.0 205,313.5 208,315.9 211,318.3 214,320.6 217,322.8 220,324.9 223,326.9 226,328.9 229,330.9 232,332.7 235,334.5 238,336.2 241,337.9 244,339.5 247,341.0 250,342.4 253,343.8 256,345.2 259,346.4 262,347.6 265,348.8 268,349.9 271,350.9 274,351.9 277,352.8 280,353.6 283,354.4 286,355.2 289,355.8 292,356.5 295,357.0 298,357.5 301,358.0 304,358.4 307,358.7 310,359.0 313,359.3 316,359.5 319,359.6 322,359.7 325,359.8 328,359.8 331,359.7 334,359.6 337,359.5 340,359.3 343,359.0 346,358.7 349,358.4 352,358.0 355,357.6 358,357.2 361,356.7 364,356.1 367,355.5 370,354.9 373,354.2 376,353.5 379,352.8 382,352.0 385,351.2 388,350.3 391,349.4 394,348.5 397,347.5 400,346.5 403,345.5 406,344.4 409,343.4 412,342.2 415,341.1 418,339.9 421,338.6 424,337.4 427,336.1 430,334.8 433,333.5 436,332.1 439,330.7 442,329.3 445,327.8 448,326.4 451,324.9 454,323.3 457,321.8 460,320.2 463,318.6 466,317.0 469,315.4 472,313.8 475,312.1 478,310.4 481,308.7 484,307.0 487,305.2 490,303.5 493,301.7 496,299.9 499,298.1 502,296.3 505,294.4 508,292.6 511,290.7 514,288.8 517,287.0 520,285.1 523,283.2 526,281.3 529,279.3 532,277.4 535,275.5 538,273.5 541,271.6 544,269.6 547,267.6 550,265.7 553,263.7 556,261.7 559,259.7 562,257.7 565,255.8 568,253.8 571,251.8 574,249.8 577,247.8 580,245.8 583,243.8 586,241.9 589,239.9 592,237.9 595,235.9 598,234.0 601,232.0 604,230.0 607,228.1 610,226.2 613,224.2 616,222.3 619,220.4 622,218.5 625,216.6 628,214.7 631,212.8 634,210.9 637,209.1 640,207.2 643,205.4 646,203.6 649,201.8 652,200.0 655,198.3 658,196.5 661,194.8 664,193.1 667,191.4 670,189.7 673,188.0 676,186.4 679,184.8 682,183.2 685,181.6 688,180.1 691,178.5 694,177.0 697,175.5 700,174.1 703,172.7 706,171.3 709,169.9 712,168.5 715,167.2 718,165.9 721,164.6 724,163.4 727,162.2 730,161.0 733,159.9 736,158.8 739,157.7 742,156.7 745,155.6 748,154.7 751,153.7 754,152.8 757,151.9 760,151.1 763,150.3 766,149.6 769,148.8 772,148.2 775,147.5 778,146.9 781,146.4 784,145.8 787,145.4 790,144.9 793,144.5 796,144.2 799,143.9 802,143.6 805,143.4 808,143.3 811,143.1 814,143.1 817,143.0 820,143.1 823,143.2 826,143.3 829,143.5 832,143.7 835,144.0 838,144.3 841,144.7 844,145.1 847,145.6 850,146.1 853,146.7 856,147.4 859,148.1 862,148.9 865,149.7 868,150.6 871,151.5 874,152.5 877,153.6 880,154.7 883,155.9 886,157.2 889,158.5 892,159.8 895,161.3 896,161.8" fill="none" stroke="#a070e0" stroke-width="2.2"/>
<polyline points="145,205.4 148,209.4 151,213.3 154,217.1 157,220.8 160,224.5 163,228.0 166,231.5 169,234.9 172,238.3 175,241.5 178,244.7 181,247.8 184,250.8 187,253.7 190,256.6 193,259.3 196,262.0 199,264.7 202,267.2 205,269.7 208,272.1 211,274.5 214,276.8 217,279.0 220,281.1 223,283.1 226,285.1 229,287.1 232,288.9 235,290.7 238,292.4 241,294.1 244,295.7 247,297.2 250,298.6 253,300.0 256,301.4 259,302.6 262,303.8 265,305.0 268,306.1 271,307.1 274,308.1 277,309.0 280,309.8 283,310.6 286,311.4 289,312.0 292,312.7 295,313.2 298,313.7 301,314.2 304,314.6 307,314.9 310,315.2 313,315.5 316,315.7 319,315.8 322,315.9 325,316.0 328,316.0 331,315.9 334,315.8 337,315.7 340,315.5 343,315.2 346,314.9 349,314.6 352,314.2 355,313.8 358,313.4 361,312.9 364,312.3 367,311.7 370,311.1 373,310.4 376,309.7 379,309.0 382,308.2 385,307.4 388,306.5 391,305.6 394,304.7 397,303.7 400,302.7 403,301.7 406,300.6 409,299.6 412,298.4 415,297.3 418,296.1 421,294.8 424,293.6 427,292.3 430,291.0 433,289.7 436,288.3 439,286.9 442,285.5 445,284.0 448,282.6 451,281.1 454,279.5 457,278.0 460,276.4 463,274.8 466,273.2 469,271.6 472,270.0 475,268.3 478,266.6 481,264.9 484,263.2 487,261.4 490,259.7 493,257.9 496,256.1 499,254.3 502,252.5 505,250.6 508,248.8 511,246.9 514,245.0 517,243.2 520,241.3 523,239.4 526,237.5 529,235.5 532,233.6 535,231.7 538,229.7 541,227.8 544,225.8 547,223.8 550,221.9 553,219.9 556,217.9 559,215.9 562,213.9 565,212.0 568,210.0 571,208.0 574,206.0 577,204.0 580,202.0 583,200.0 586,198.1 589,196.1 592,194.1 595,192.1 598,190.2 601,188.2 604,186.2 607,184.3 610,182.4 613,180.4 616,178.5 619,176.6 622,174.7 625,172.8 628,170.9 631,169.0 634,167.1 637,165.3 640,163.4 643,161.6 646,159.8 649,158.0 652,156.2 655,154.5 658,152.7 661,151.0 664,149.3 667,147.6 670,145.9 673,144.2 676,142.6 679,141.0 682,139.4 685,137.8 688,136.3 691,134.7 694,133.2 697,131.7 700,130.3 703,128.9 706,127.5 709,126.1 712,124.7 715,123.4 718,122.1 721,120.8 724,119.6 727,118.4 730,117.2 733,116.1 736,115.0 739,113.9 742,112.9 745,111.8 748,110.9 751,109.9 754,109.0 757,108.1 760,107.3 763,106.5 766,105.8 769,105.0 772,104.4 775,103.7 778,103.1 781,102.6 784,102.0 787,101.6 790,101.1 793,100.7 796,100.4 799,100.1 802,99.8 805,99.6 808,99.5 811,99.3 814,99.3 817,99.2 820,99.3 823,99.4 826,99.5 829,99.7 832,99.9 835,100.2 838,100.5 841,100.9 844,101.3 847,101.8 850,102.3 853,102.9 856,103.6 859,104.3 862,105.1 865,105.9 868,106.8 871,107.7 874,108.7 877,109.8 880,110.9 883,112.1 886,113.4 889,114.7 892,116.0 895,117.5 896,118.0" fill="none" stroke="#ff0000" stroke-width="2.4"/>
<polyline points="145,336.8 148,340.8 151,344.7 154,348.5 157,352.2 160,355.9 163,359.4 166,362.9 169,366.3 172,369.7 175,372.9 178,376.1 181,379.2 184,382.2 187,385.1 190,388.0 193,390.7 196,393.4 199,396.1 202,398.6 205,401.1 208,403.5 211,405.9 214,408.2 217,410.4 220,412.5 223,414.5 226,416.5 229,418.5 232,420.3 235,422.1 238,423.8 241,425.5 244,427.1 247,428.6 250,430.0 253,431.4 256,432.8 259,434.0 262,435.2 265,436.4 268,437.5 271,438.5 274,439.5 277,440.4 280,441.2 283,442.0 286,442.8 289,443.4 292,444.1 295,444.6 298,445.1 301,445.6 304,446.0 307,446.3 310,446.6 313,446.9 316,447.1 319,447.2 322,447.3 325,447.4 328,447.4 331,447.3 334,447.2 337,447.1 340,446.9 343,446.6 346,446.3 349,446.0 352,445.6 355,445.2 358,444.8 361,444.3 364,443.7 367,443.1 370,442.5 373,441.8 376,441.1 379,440.4 382,439.6 385,438.8 388,437.9 391,437.0 394,436.1 397,435.1 400,434.1 403,433.1 406,432.0 409,431.0 412,429.8 415,428.7 418,427.5 421,426.2 424,425.0 427,423.7 430,422.4 433,421.1 436,419.7 439,418.3 442,416.9 445,415.4 448,414.0 451,412.5 454,410.9 457,409.4 460,407.8 463,406.2 466,404.6 469,403.0 472,401.4 475,399.7 478,398.0 481,396.3 484,394.6 487,392.8 490,391.1 493,389.3 496,387.5 499,385.7 502,383.9 505,382.0 508,380.2 511,378.3 514,376.4 517,374.6 520,372.7 523,370.8 526,368.9 529,366.9 532,365.0 535,363.1 538,361.1 541,359.2 544,357.2 547,355.2 550,353.3 553,351.3 556,349.3 559,347.3 562,345.3 565,343.4 568,341.4 571,339.4 574,337.4 577,335.4 580,333.4 583,331.4 586,329.5 589,327.5 592,325.5 595,323.5 598,321.6 601,319.6 604,317.6 607,315.7 610,313.8 613,311.8 616,309.9 619,308.0 622,306.1 625,304.2 628,302.3 631,300.4 634,298.5 637,296.7 640,294.8 643,293.0 646,291.2 649,289.4 652,287.6 655,285.9 658,284.1 661,282.4 664,280.7 667,279.0 670,277.3 673,275.6 676,274.0 679,272.4 682,270.8 685,269.2 688,267.7 691,266.1 694,264.6 697,263.1 700,261.7 703,260.3 706,258.9 709,257.5 712,256.1 715,254.8 718,253.5 721,252.2 724,251.0 727,249.8 730,248.6 733,247.5 736,246.4 739,245.3 742,244.3 745,243.2 748,242.3 751,241.3 754,240.4 757,239.5 760,238.7 763,237.9 766,237.2 769,236.4 772,235.8 775,235.1 778,234.5 781,234.0 784,233.4 787,233.0 790,232.5 793,232.1 796,231.8 799,231.5 802,231.2 805,231.0 808,230.9 811,230.7 814,230.7 817,230.6 820,230.7 823,230.8 826,230.9 829,231.1 832,231.3 835,231.6 838,231.9 841,232.3 844,232.7 847,233.2 850,233.7 853,234.3 856,235.0 859,235.7 862,236.5 865,237.3 868,238.2 871,239.1 874,240.1 877,241.2 880,242.3 883,243.5 886,244.8 889,246.1 892,247.4 895,248.9 896,249.4" fill="none" stroke="#0000ff" stroke-width="4.8"/>
<path d="M10.5 196V222M9 216.5h1M11 202.5h1M15.5 204V212M14 210.5h1M16 206.5h1M30.5 215V227M29 224.5h1M31 218.5h1M60.5 241V253M59 250.5h1M61 244.5h1M70.5 256V268M69 265.5h1M71 259.5h1M80.5 249V278M79 271.5h1M81 256.5h1M85.5 237V256M84 251.5h1M86 242.5h1M110.5 290V309M109 304.5h1M111 295.5h1M120.5 296V324M119 317.5h1M121 303.5h1M135.5 364V395M134 387.5h1M136 372.5h1M150.5 406V436M149 428.5h1M151 414.5h1M155.5 305V380M154 361.5h1M156 324.5h1M180.5 331V350M179 345.5h1M181 336.5h1M195.5 335V365M194 358.5h1M196 342.5h1M220.5 413V429M219 425.5h1M221 417.5h1M225.5 409V429M224 424.5h1M226 414.5h1M230.5 398V429M229 421.5h1M231 406.5h1M235.5 398V422M234 416.5h1M236 404.5h1M255.5 488V534M254 522.5h1M256 500.5h1M265.5 510V523M264 520.5h1M266 513.5h1M270.5 518V549M269 541.5h1M271 526.5h1M275.5 522V537M274 533.5h1M276 526.5h1M285.5 533V549M284 545.5h1M286 537.5h1M290.5 495V537M289 526.5h1M291 506.5h1M295.5 465V508M294 497.5h1M296 476.5h1M305.5 473V481M304 479.5h1M306 475.5h1M310.5 447V478M309 470.5h1M311 455.5h1M315.5 432V465M314 457.5h1M316 440.5h1M320.5 428V444M319 440.5h1M321 432.5h1M325.5 417V437M324 432.5h1M326 422.5h1M330.5 424V448M329 442.5h1M331 430.5h1M335.5 424V446M334 440.5h1M336 430.5h1M340.5 424V437M339 434.5h1M341 427.5h1M345.5 413V437M344 431.5h1M346 419.5h1M365.5 432V444M364 441.5h1M366 435.5h1M370.5 428V437M369 435.5h1M371 430.5h1M380.5 424V437M379 434.5h1M381 427.5h1M385.5 428V437M384 435.5h1M386 430.5h1M395.5 424V437M394 434.5h1M396 427.5h1M400.5 424V437M399 434.5h1M401 427.5h1M405.5 428V437M404 435.5h1M406 430.5h1M410.5 424V432M409 430.5h1M411 426.5h1M415.5 421V432M414 429.5h1M416 424.5h1M425.5 398V450M424 437.5h1M426 411.5h1M435.5 417V425M434 423.5h1M436 419.5h1M445.5 387V418M444 410.5h1M446 395.5h1M460.5 398V422M459 416.5h1M461 404.5h1M465.5 387V407M464 402.5h1M466 392.5h1M470.5 357V388M469 380.5h1M471 365.5h1M485.5 349V373M484 367.5h1M486 355.5h1M495.5 357V369M494 366.5h1M496 360.5h1M515.5 368V377M514 375.5h1M516 370.5h1M520.5 361V373M519 370.5h1M521 364.5h1M535.5 364V377M534 374.5h1M536 367.5h1M540.5 308V373M539 357.5h1M541 324.5h1M550.5 290V321M549 313.5h1M551 298.5h1M560.5 263V298M559 289.5h1M561 272.5h1M570.5 286V302M569 298.5h1M571 290.5h1M575.5 286V302M574 298.5h1M576 290.5h1M585.5 282V306M584 300.5h1M586 288.5h1M605.5 293V306M604 303.5h1M606 296.5h1M635.5 331V358M634 351.5h1M636 338.5h1M650.5 353V373M649 368.5h1M651 358.5h1M655.5 338V365M654 358.5h1M656 345.5h1M660.5 320V343M659 337.5h1M661 326.5h1M665.5 308V323M664 319.5h1M666 312.5h1M675.5 305V328M674 322.5h1M676 311.5h1M700.5 316V324M699 322.5h1M701 318.5h1M705.5 308V321M704 318.5h1M706 311.5h1M710.5 305V317M709 314.5h1M711 308.5h1M715.5 302V317M714 313.5h1M716 306.5h1M720.5 290V309M719 304.5h1M721 295.5h1M725.5 260V287M724 280.5h1M726 267.5h1M735.5 271V290M734 285.5h1M736 276.5h1M740.5 241V282M739 272.5h1M741 251.5h1M745.5 222V246M744 240.5h1M746 228.5h1M750.5 222V238M749 234.5h1M751 226.5h1M755.5 204V235M754 227.5h1M756 212.5h1M760.5 185V212M759 205.5h1M761 192.5h1M775.5 204V223M774 218.5h1M776 209.5h1M790.5 151V208M789 194.5h1M791 165.5h1M800.5 155V175M799 170.5h1M801 160.5h1M840.5 234V250M839 246.5h1M841 238.5h1M845.5 211V250M844 240.5h1M846 221.5h1M850.5 215V234M849 229.5h1M851 220.5h1M860.5 211V238M859 231.5h1M861 218.5h1M870.5 237V260M869 254.5h1M871 243.5h1M880.5 244V260M879 256.5h1M881 248.5h1M885.5 248V260M884 257.5h1M886 251.5h1" stroke="#00ff00" stroke-width="1" fill="none" shape-rendering="crispEdges"/>
<path d="M5.5 192V220M4 199.5h1M6 213.5h1M20.5 200V220M19 205.5h1M21 215.5h1M25.5 204V227M24 210.5h1M26 221.5h1M35.5 211V227M34 215.5h1M36 223.5h1M40.5 222V246M39 228.5h1M41 240.5h1M45.5 234V242M44 236.5h1M46 240.5h1M50.5 222V242M49 227.5h1M51 237.5h1M55.5 237V250M54 240.5h1M56 247.5h1M65.5 245V264M64 250.5h1M66 259.5h1M75.5 256V283M74 263.5h1M76 276.5h1M90.5 245V256M89 248.5h1M91 253.5h1M95.5 252V272M94 257.5h1M96 267.5h1M100.5 256V268M99 259.5h1M101 265.5h1M105.5 260V283M104 266.5h1M106 277.5h1M115.5 301V324M114 307.5h1M116 318.5h1M125.5 293V353M124 308.5h1M126 338.5h1M130.5 327V380M129 340.5h1M131 367.5h1M140.5 361V390M139 368.5h1M141 383.5h1M145.5 381V432M144 394.5h1M146 419.5h1M160.5 278V323M159 289.5h1M161 312.5h1M165.5 297V335M164 306.5h1M166 326.5h1M170.5 320V347M169 327.5h1M171 340.5h1M175.5 328V347M174 333.5h1M176 342.5h1M185.5 335V349M184 338.5h1M186 346.5h1M190.5 338V358M189 343.5h1M191 353.5h1M200.5 342V356M199 346.5h1M201 352.5h1M205.5 346V368M204 352.5h1M206 362.5h1M210.5 368V406M209 378.5h1M211 396.5h1M215.5 398V440M214 408.5h1M216 430.5h1M240.5 402V422M239 407.5h1M241 417.5h1M245.5 409V425M244 413.5h1M246 421.5h1M250.5 428V492M249 444.5h1M251 476.5h1M260.5 495V515M259 500.5h1M261 510.5h1M280.5 522V537M279 526.5h1M281 533.5h1M300.5 462V481M299 467.5h1M301 476.5h1M350.5 409V432M349 415.5h1M351 426.5h1M355.5 417V432M354 421.5h1M356 428.5h1M360.5 421V440M359 426.5h1M361 435.5h1M375.5 424V437M374 427.5h1M376 434.5h1M390.5 424V437M389 427.5h1M391 434.5h1M420.5 424V432M419 426.5h1M421 430.5h1M430.5 394V418M429 400.5h1M431 412.5h1M440.5 406V422M439 410.5h1M441 418.5h1M450.5 406V422M449 410.5h1M451 418.5h1M455.5 409V422M454 412.5h1M456 419.5h1M475.5 349V365M474 353.5h1M476 361.5h1M480.5 357V380M479 363.5h1M481 374.5h1M490.5 353V365M489 356.5h1M491 362.5h1M500.5 361V369M499 363.5h1M501 367.5h1M505.5 361V380M504 366.5h1M506 375.5h1M510.5 364V380M509 368.5h1M511 376.5h1M525.5 364V377M524 367.5h1M526 374.5h1M530.5 368V380M529 371.5h1M531 377.5h1M545.5 293V321M544 300.5h1M546 314.5h1M555.5 290V302M554 293.5h1M556 299.5h1M565.5 263V306M564 274.5h1M566 295.5h1M580.5 293V313M579 298.5h1M581 308.5h1M590.5 271V294M589 277.5h1M591 288.5h1M595.5 279V302M594 285.5h1M596 296.5h1M600.5 293V309M599 297.5h1M601 305.5h1M610.5 293V306M609 296.5h1M611 303.5h1M615.5 297V332M614 306.5h1M616 323.5h1M620.5 327V354M619 334.5h1M621 347.5h1M625.5 316V354M624 326.5h1M626 344.5h1M630.5 349V365M629 353.5h1M631 361.5h1M640.5 331V350M639 336.5h1M641 345.5h1M645.5 331V350M644 336.5h1M646 345.5h1M670.5 305V336M669 313.5h1M671 328.5h1M680.5 308V324M679 312.5h1M681 320.5h1M685.5 316V336M684 321.5h1M686 331.5h1M695.5 312V324M694 315.5h1M696 321.5h1M730.5 263V279M729 267.5h1M731 275.5h1M765.5 207V231M764 213.5h1M766 225.5h1M770.5 192V223M769 200.5h1M771 215.5h1M780.5 196V220M779 202.5h1M781 214.5h1M785.5 196V212M784 200.5h1M786 208.5h1M795.5 155V180M794 161.5h1M796 174.5h1M805.5 159V178M804 164.5h1M806 173.5h1M810.5 155V193M809 164.5h1M811 184.5h1M815.5 181V220M814 191.5h1M816 210.5h1M820.5 193V207M819 196.5h1M821 204.5h1M825.5 207V234M824 214.5h1M826 227.5h1M830.5 222V242M829 227.5h1M831 237.5h1M835.5 237V250M834 240.5h1M836 247.5h1M855.5 211V234M854 217.5h1M856 228.5h1M865.5 226V245M864 231.5h1M866 240.5h1M875.5 240V264M874 246.5h1M876 258.5h1M890.5 248V282M889 256.5h1M891 274.5h1M895.5 262V271M894 264.5h1M896 269.5h1" stroke="#ff0000" stroke-width="1" fill="none" shape-rendering="crispEdges"/>
<path d="M690.5 320V328M689 322.5h1M691 326.5h1" stroke="#e0ff00" stroke-width="1" fill="none" shape-rendering="crispEdges"/>
</svg>
<rect x="2" y="471" width="1224" height="1" fill="#ff0000"/>
<rect x="690" y="132" width="1" height="586" fill="#ff0000"/>
<path d="M5.5 708V718M20.5 711V718M25.5 702V718M35.5 710V718M40.5 686V718M45.5 704V718M50.5 708V718M55.5 706V718M65.5 706V718M75.5 676V718M90.5 711V718M95.5 695V718M100.5 715V718M105.5 711V718M115.5 699V718M125.5 670V718M130.5 646V718M140.5 690V718M145.5 681V718M160.5 668V718M165.5 677V718M170.5 692V718M175.5 694V718M185.5 703V718M190.5 703V718M200.5 704V718M205.5 703V718M210.5 699V718M215.5 658V718M240.5 703V718M245.5 681V718M250.5 642V718M260.5 694V718M280.5 703V718M300.5 675V718M350.5 693V718M355.5 685V718M360.5 667V718M375.5 711V718M390.5 711V718M420.5 711V718M430.5 696V718M440.5 714V718M450.5 616V718M455.5 692V718M475.5 687V718M480.5 704V718M490.5 682V718M500.5 695V718M505.5 712V718M510.5 707V718M525.5 704V718M530.5 709V718M545.5 656V718M555.5 698V718M565.5 652V718M580.5 693V718M590.5 683V718M595.5 702V718M600.5 703V718M610.5 703V718M615.5 696V718M620.5 676V718M625.5 686V718M630.5 704V718M640.5 696V718M645.5 711V718M670.5 705V718M680.5 701V718M685.5 700V718M695.5 709V718M730.5 706V718M765.5 700V718M770.5 696V718M780.5 695V718M785.5 704V718M795.5 663V718M805.5 687V718M810.5 678V718M815.5 676V718M820.5 708V718M825.5 692V718M830.5 699V718M835.5 711V718M855.5 683V718M865.5 686V718M875.5 668V718M890.5 630V718M895.5 715V718" stroke="#ff0000" stroke-width="1" fill="none" shape-rendering="crispEdges"/>
<path d="M10.5 708V718M15.5 702V718M30.5 714V718M60.5 701V718M70.5 706V718M80.5 690V718M85.5 710V718M110.5 710V718M120.5 698V718M135.5 682V718M150.5 658V718M155.5 579V718M180.5 701V718M195.5 669V718M220.5 702V718M225.5 702V718M230.5 692V718M235.5 699V718M255.5 578V718M265.5 703V718M270.5 685V718M275.5 708V718M285.5 708V718M290.5 669V718M295.5 641V718M305.5 709V718M310.5 674V718M315.5 672V718M320.5 692V718M325.5 690V718M330.5 670V718M335.5 706V718M340.5 711V718M345.5 700V718M365.5 682V718M370.5 705V718M380.5 709V718M385.5 717V718M395.5 714V718M400.5 709V718M405.5 710V718M410.5 712V718M415.5 712V718M425.5 680V718M435.5 714V718M445.5 656V718M460.5 695V718M465.5 673V718M470.5 633V718M485.5 683V718M495.5 694V718M515.5 710V718M520.5 712V718M535.5 711V718M540.5 630V718M550.5 692V718M560.5 687V718M570.5 712V718M575.5 695V718M585.5 692V718M605.5 710V718M635.5 712V718M650.5 705V718M655.5 709V718M660.5 698V718M665.5 711V718M675.5 705V718M700.5 712V718M705.5 701V718M710.5 703V718M715.5 694V718M720.5 702V718M725.5 677V718M735.5 707V718M740.5 683V718M745.5 663V718M750.5 695V718M755.5 681V718M760.5 675V718M775.5 711V718M790.5 639V718M800.5 696V718M840.5 711V718M845.5 653V718M850.5 669V718M860.5 666V718M870.5 689V718M880.5 699V718M885.5 682V718" stroke="#0000ff" stroke-width="1" fill="none" shape-rendering="crispEdges"/>
<path d="M690.5 711V718" stroke="#ff00ff" stroke-width="1" fill="none" shape-rendering="crispEdges"/>
<rect x="2" y="566" width="1224" height="2" fill="#f4f2e8"/>
<rect x="2" y="568" width="1224" height="1" fill="#8c8a80"/>
<rect x="1226" y="132" width="1" height="587" fill="#ffffff"/>
<rect x="2" y="718" width="1224" height="1" fill="#ffffff"/>
</svg>
<div class="t" style="left:1230px;top:134px;font-size:13px;font-weight:bold;color:#fff;letter-spacing:-0.2px;">4.00</div>
<div class="t" style="left:1230px;top:168px;font-size:13px;font-weight:bold;color:#fff;letter-spacing:-0.2px;">3.90</div>
<div class="t" style="left:1230px;top:205px;font-size:13px;font-weight:bold;color:#fff;letter-spacing:-0.2px;">3.80</div>
<div class="t" style="left:1230px;top:243px;font-size:13px;font-weight:bold;color:#fff;letter-spacing:-0.2px;">3.70</div>
<div class="t" style="left:1230px;top:280px;font-size:13px;font-weight:bold;color:#fff;letter-spacing:-0.2px;">3.60</div>
<div class="t" style="left:1230px;top:317px;font-size:13px;font-weight:bold;color:#fff;letter-spacing:-0.2px;">3.50</div>
<div class="t" style="left:1230px;top:355px;font-size:13px;font-weight:bold;color:#fff;letter-spacing:-0.2px;">3.40</div>
<div class="t" style="left:1230px;top:392px;font-size:13px;font-weight:bold;color:#fff;letter-spacing:-0.2px;">3.30</div>
<div class="t" style="left:1230px;top:430px;font-size:13px;font-weight:bold;color:#fff;letter-spacing:-0.2px;">3.20</div>
<div class="t" style="left:1230px;top:505px;font-size:13px;font-weight:bold;color:#fff;letter-spacing:-0.2px;">3.00</div>
<div class="t" style="left:1230px;top:542px;font-size:13px;font-weight:bold;color:#fff;letter-spacing:-0.2px;">2.90</div>
<div class="t" style="left:1227px;top:576px;font-size:13px;font-weight:bold;color:#fff;letter-spacing:-0.2px;">1.5M</div>
<div class="t" style="left:1227px;top:621px;font-size:13px;font-weight:bold;color:#fff;letter-spacing:-0.2px;">1M</div>
<div class="t" style="left:1227px;top:666px;font-size:13px;font-weight:bold;color:#fff;letter-spacing:-0.2px;">500K</div>
<div class="t" style="left:10px;top:721px;font-size:13px;font-weight:bold;color:#fff;">2</div>
<div class="t" style="left:35px;top:721px;font-size:13px;font-weight:bold;color:#fff;">9</div>
<div class="t" style="left:60px;top:721px;font-size:13px;font-weight:bold;color:#fff;">16</div>
<div class="t" style="left:85px;top:721px;font-size:13px;font-weight:bold;color:#fff;">23</div>
<div class="t" style="left:110px;top:721px;font-size:13px;font-weight:bold;color:#fff;">30</div>
<div class="t" style="left:135px;top:721px;font-size:13px;font-weight:bold;color:#fff;">6</div>
<div class="t" style="left:160px;top:721px;font-size:13px;font-weight:bold;color:#fff;">13</div>
<div class="t" style="left:185px;top:721px;font-size:13px;font-weight:bold;color:#fff;">20</div>
<div class="t" style="left:210px;top:721px;font-size:13px;font-weight:bold;color:#fff;">27</div>
<div class="t" style="left:235px;top:721px;font-size:13px;font-weight:bold;color:#fff;">4</div>
<div class="t" style="left:260px;top:721px;font-size:13px;font-weight:bold;color:#fff;">11</div>
<div class="t" style="left:285px;top:721px;font-size:13px;font-weight:bold;color:#fff;">18</div>
<div class="t" style="left:310px;top:721px;font-size:13px;font-weight:bold;color:#fff;">25</div>
<div class="t" style="left:335px;top:721px;font-size:13px;font-weight:bold;color:#fff;">1</div>
<div class="t" style="left:360px;top:721px;font-size:13px;font-weight:bold;color:#fff;">8</div>
<div class="t" style="left:385px;top:721px;font-size:13px;font-weight:bold;color:#fff;">15</div>
<div class="t" style="left:410px;top:721px;font-size:13px;font-weight:bold;color:#fff;">22</div>
<div class="t" style="left:435px;top:721px;font-size:13px;font-weight:bold;color:#fff;">29</div>
<div class="t" style="left:460px;top:721px;font-size:13px;font-weight:bold;color:#fff;">5</div>
<div class="t" style="left:485px;top:721px;font-size:13px;font-weight:bold;color:#fff;">12</div>
<div class="t" style="left:510px;top:721px;font-size:13px;font-weight:bold;color:#fff;">19</div>
<div class="t" style="left:535px;top:721px;font-size:13px;font-weight:bold;color:#fff;">26</div>
<div class="t" style="left:560px;top:721px;font-size:13px;font-weight:bold;color:#fff;">3</div>
<div class="t" style="left:585px;top:721px;font-size:13px;font-weight:bold;color:#fff;">10</div>
<div class="t" style="left:610px;top:721px;font-size:13px;font-weight:bold;color:#fff;">17</div>
<div class="t" style="left:635px;top:721px;font-size:13px;font-weight:bold;color:#fff;">24</div>
<div class="t" style="left:685px;top:721px;font-size:13px;font-weight:bold;color:#fff;">7</div>
<div class="t" style="left:710px;top:721px;font-size:13px;font-weight:bold;color:#fff;">14</div>
<div class="t" style="left:735px;top:721px;font-size:13px;font-weight:bold;color:#fff;">21</div>
<div class="t" style="left:760px;top:721px;font-size:13px;font-weight:bold;color:#fff;">28</div>
<div class="t" style="left:785px;top:721px;font-size:13px;font-weight:bold;color:#fff;">5</div>
<div class="t" style="left:810px;top:721px;font-size:13px;font-weight:bold;color:#fff;">12</div>
<div class="t" style="left:835px;top:721px;font-size:13px;font-weight:bold;color:#fff;">19</div>
<div class="t" style="left:860px;top:721px;font-size:13px;font-weight:bold;color:#fff;">27</div>
<div class="t" style="left:880px;top:721px;font-size:13px;font-weight:bold;color:#fff;">2</div>
<div class="t" style="left:10px;top:736px;font-size:13px;font-weight:bold;color:#fff;">May</div>
<div class="t" style="left:120px;top:736px;font-size:13px;font-weight:bold;color:#fff;">Jun</div>
<div class="t" style="left:230px;top:736px;font-size:13px;font-weight:bold;color:#fff;">Jul</div>
<div class="t" style="left:335px;top:736px;font-size:13px;font-weight:bold;color:#fff;">Aug</div>
<div class="t" style="left:450px;top:736px;font-size:13px;font-weight:bold;color:#fff;">Sep</div>
<div class="t" style="left:560px;top:736px;font-size:13px;font-weight:bold;color:#fff;">Oct</div>
<div class="t" style="left:665px;top:736px;font-size:13px;font-weight:bold;color:#fff;">Nov</div>
<div class="t" style="left:775px;top:736px;font-size:13px;font-weight:bold;color:#fff;">Dec</div>
<div class="t" style="left:880px;top:736px;font-size:13px;font-weight:bold;color:#fff;">2006</div>
<div class="abs" style="left:2px;top:150px;width:250px;height:15px;background:#c8c8c8;border-top:1px solid #fff;box-sizing:border-box;"></div>
<div class="t" style="left:5px;top:151px;font-size:11px;font-weight:normal;color:#000;">O: &nbsp;3.65 &nbsp;&nbsp;H: &nbsp;3.66 &nbsp;&nbsp;L: &nbsp;3.64 &nbsp;&nbsp;C: &nbsp;3.64</div>
<div class="abs" style="left:194px;top:152px;width:57px;height:11px;background:#ff0000;"></div>
<div class="t" style="left:198px;top:151px;font-size:11px;font-weight:normal;color:#000;">Net: -0.01</div>
<div class="t" style="left:254px;top:150px;font-size:12.8px;font-weight:bold;color:#fff;">4191,13395609,255,16711680,2,false)</div>
<div class="abs" style="left:5px;top:526px;width:24px;height:13px;background:#00c0c0;"></div>
<div class="t" style="left:6px;top:526px;font-size:11px;font-weight:normal;color:#003030;line-height:13px;">HBH</div>
<div class="abs" style="left:3px;top:539px;width:28px;height:16px;background:#ece9d8;border-top:1px solid #fff;border-left:1px solid #fff;border-right:1px solid #716f64;border-bottom:1px solid #716f64;box-sizing:border-box;"></div>
<div class="t" style="left:13px;top:540px;font-size:11px;font-weight:bold;color:#000;">?</div>
<div class="t" style="left:5px;top:555px;font-size:8.2px;font-weight:normal;color:#fff;line-height:12px;">Copyright &copy; 2005 eSignal.</div>
<div class="t" style="left:2px;top:573px;font-size:13.5px;font-weight:bold;color:#0000ff;">Volume</div>
<div class="abs" style="left:1227px;top:263px;width:29px;height:16px;background:#ff0000;"></div>
<div class="t" style="left:1230px;top:265px;font-size:14px;font-weight:bold;color:#000;font-family:'Liberation Serif',serif;letter-spacing:-0.2px;">3.64</div>
<div class="abs" style="left:1228px;top:463px;width:50px;height:16px;background:#c8c8c8;"></div>
<div class="t" style="left:1228px;top:464px;font-size:14px;font-weight:bold;color:#000;font-family:'Liberation Serif',serif;letter-spacing:-0.2px;">3.10641</div>
<div class="abs" style="left:1227px;top:702px;width:48px;height:16px;background:#ff0000;"></div>
<div class="t" style="left:1227px;top:703px;font-size:14px;font-weight:bold;color:#000;font-family:'Liberation Serif',serif;letter-spacing:-0.4px;">31.942K</div>
<div class="abs" style="left:660px;top:719px;width:60px;height:16px;background:#c8c8c8;"></div>
<div class="t" style="left:664px;top:720px;font-size:13px;font-weight:normal;color:#000;letter-spacing:-0.3px;text-shadow:0.3px 0 0 #000;">11/08/05</div>
<div class="abs" style="left:0px;top:0px;width:1280px;height:26px;background:linear-gradient(to bottom,#7aa4ff 0px,#3a80f8 1px,#1262ec 2px,#0856e0 8px,#0858e4 14px,#0a68f4 17px,#0a70fa 21px,#0a5ce8 23px,#0040c8 24px,#0038c0 26px);"></div>
<svg class="abs" style="left:2px;top:3px" width="18" height="18" viewBox="0 0 18 18" shape-rendering="crispEdges"><rect x="0.5" y="0.5" width="15" height="12" fill="#000" stroke="#d8d4c8"/><polyline points="2,8 5,5 8,7 10,6 14,3" fill="none" stroke="#f00" stroke-width="1.2" shape-rendering="auto"/><polyline points="2,10 5,8 8,9 11,7 14,5" fill="none" stroke="#0f0" stroke-width="1.2" shape-rendering="auto"/><polyline points="2,11 6,10 9,10 12,9 14,8" fill="none" stroke="#ff0" stroke-width="1" shape-rendering="auto"/><rect x="4" y="14" width="8" height="2" fill="#c8c4b8"/><rect x="3" y="16" width="10" height="1" fill="#202020"/></svg>
<div class="t" style="left:22px;top:5px;font-size:13px;font-weight:bold;color:#fff;line-height:16px;letter-spacing:-0.2px;text-shadow:1px 1px 0 #0a1e78;">eSignal Layout - FUTURES - [eSignal ProAdvCh1-1]</div>
<div class="abs" style="left:1211px;top:3px;width:19px;height:19px;border:1px solid #fff;border-radius:3px;background:linear-gradient(135deg,#6f9df8 0%,#3a72ea 60%,#2a5cd8 100%);"></div>
<div class="abs" style="left:1234px;top:3px;width:19px;height:19px;border:1px solid #fff;border-radius:3px;background:linear-gradient(135deg,#6f9df8 0%,#3a72ea 60%,#2a5cd8 100%);"></div>
<div class="abs" style="left:1257px;top:3px;width:19px;height:19px;border:1px solid #fff;border-radius:3px;background:linear-gradient(135deg,#e8795a 0%,#d9502a 60%,#c0401c 100%);"></div>
<svg class="abs" style="left:1216px;top:8px" width="12" height="12" viewBox="0 0 12 12" shape-rendering="crispEdges"><rect x="1" y="7" width="7" height="3" fill="#fff"/></svg>
<svg class="abs" style="left:1239px;top:8px" width="12" height="12" viewBox="0 0 12 12" shape-rendering="crispEdges"><rect x="1.5" y="4.5" width="6" height="5" fill="none" stroke="#fff"/><rect x="1" y="4" width="7" height="2" fill="#fff"/><path d="M4 2.5h6v5" fill="none" stroke="#fff"/><rect x="4" y="1" width="7" height="2" fill="#fff"/></svg>
<svg class="abs" style="left:1261px;top:7px" width="14" height="14" viewBox="0 0 14 14" shape-rendering="crispEdges"><path d="M3 3L11 11M11 3L3 11" stroke="#fff" stroke-width="2" shape-rendering="auto"/></svg>
<div class="abs" style="left:0px;top:50px;width:1280px;height:1px;background:#aca899;"></div>
<div class="abs" style="left:0px;top:51px;width:1280px;height:1px;background:#fcfcf8;"></div>
<div class="abs" style="left:2px;top:29px;width:1px;height:19px;background:#fff;border-right:1px solid #aca899;"></div>
<svg class="abs" style="left:11px;top:31px" width="16" height="15" viewBox="0 0 16 15" shape-rendering="crispEdges"><rect x="0" y="0" width="16" height="15" fill="#fff"/><rect x="2" y="5" width="2" height="7" fill="#f00"/><rect x="5" y="7" width="2" height="7" fill="#f0f"/><rect x="8" y="3" width="2" height="9" fill="#0a0"/><rect x="11" y="1" width="2" height="9" fill="#f00"/><rect x="9" y="10" width="1" height="3" fill="#060"/></svg>
<div class="t" style="left:34px;top:31px;font-size:11px;font-weight:normal;color:#000;line-height:14px;"><u>F</u>ile</div>
<div class="t" style="left:63px;top:31px;font-size:11px;font-weight:normal;color:#000;line-height:14px;"><u>L</u>ayout</div>
<div class="t" style="left:109px;top:31px;font-size:11px;font-weight:normal;color:#000;line-height:14px;"><u>V</u>iew</div>
<div class="t" style="left:145px;top:31px;font-size:11px;font-weight:normal;color:#000;line-height:14px;"><u>T</u>ools</div>
<div class="t" style="left:182px;top:31px;font-size:11px;font-weight:normal;color:#000;line-height:14px;">L<u>i</u>nes</div>
<div class="t" style="left:220px;top:31px;font-size:11px;font-weight:normal;color:#000;line-height:14px;">Chart <u>O</u>ptions</div>
<div class="t" style="left:299px;top:31px;font-size:11px;font-weight:normal;color:#000;line-height:14px;"><u>R</u>esearch</div>
<div class="t" style="left:358px;top:31px;font-size:11px;font-weight:normal;color:#000;line-height:14px;">Scanner</div>
<div class="t" style="left:409px;top:31px;font-size:11px;font-weight:normal;color:#000;line-height:14px;">Customer Support</div>
<div class="t" style="left:510px;top:31px;font-size:11px;font-weight:normal;color:#000;line-height:14px;">Trade</div>
<div class="t" style="left:551px;top:31px;font-size:11px;font-weight:normal;color:#000;line-height:14px;"><u>W</u>indow</div>
<div class="t" style="left:601px;top:31px;font-size:11px;font-weight:normal;color:#000;line-height:14px;"><u>H</u>elp</div>
<div class="abs" style="left:1233px;top:34px;width:13px;height:12px;background:#ece9d8;border-top:1px solid #fff;border-left:1px solid #fff;border-right:1px solid #716f64;border-bottom:1px solid #716f64;"></div>
<div class="abs" style="left:1248px;top:34px;width:13px;height:12px;background:#ece9d8;border-top:1px solid #fff;border-left:1px solid #fff;border-right:1px solid #716f64;border-bottom:1px solid #716f64;"></div>
<div class="abs" style="left:1263px;top:34px;width:13px;height:12px;background:#ece9d8;border-top:1px solid #fff;border-left:1px solid #fff;border-right:1px solid #716f64;border-bottom:1px solid #716f64;"></div>
<svg class="abs" style="left:1236px;top:36px" width="10" height="10" viewBox="0 0 10 10" shape-rendering="crispEdges"><rect x="1" y="6" width="6" height="2" fill="#000"/></svg>
<svg class="abs" style="left:1251px;top:36px" width="10" height="10" viewBox="0 0 10 10" shape-rendering="crispEdges"><rect x="1.5" y="3.5" width="5" height="5" fill="none" stroke="#000"/><rect x="1" y="3" width="6" height="2" fill="#000"/><path d="M3.5 3V0.5h5.5v5H7" fill="none" stroke="#000"/><rect x="3" y="0" width="6" height="2" fill="#000"/></svg>
<svg class="abs" style="left:1266px;top:36px" width="10" height="10" viewBox="0 0 10 10" shape-rendering="crispEdges"><path d="M1 1L8 8M8 1L1 8" stroke="#000" stroke-width="1.6" shape-rendering="auto"/></svg>
<div class="abs" style="left:3px;top:56px;width:91px;height:19px;background:#fff;border:1px solid #7f9db9;"></div>
<div class="t" style="left:8px;top:59px;font-size:11px;font-weight:normal;color:#000;line-height:14px;">SNC-LIS</div>
<div class="abs" style="left:79px;top:58px;width:15px;height:16px;background:linear-gradient(#d2ddfb,#b5c8f6);border-radius:1px;"></div>
<svg class="abs" style="left:81px;top:61px" width="12" height="10" viewBox="0 0 12 10" shape-rendering="crispEdges"><path d="M2.5 3L6 6.5L9.5 3" fill="none" stroke="#4d6185" stroke-width="2" shape-rendering="auto"/></svg>
<div class="abs" style="left:98px;top:56px;width:20px;height:19px;border-top:1px solid #404040;border-left:1px solid #404040;border-right:1px solid #fff;border-bottom:1px solid #fff;background:#f4f2ea;"></div>
<svg class="abs" style="left:100px;top:58px" width="19" height="17" viewBox="0 0 19 17" shape-rendering="crispEdges"><rect x="1.5" y="0.5" width="15" height="6" fill="#00e000" stroke="#000" stroke-width="1"/><g shape-rendering="auto"><rect x="1.5" y="9" width="15.5" height="7" rx="3.5" fill="none" stroke="#000" stroke-width="3"/><rect x="1.5" y="9" width="15.5" height="7" rx="3.5" fill="none" stroke="#ffee00" stroke-width="1.6"/><path d="M5 12.5h9" stroke="#000" stroke-width="3"/><path d="M5.5 12.5h8" stroke="#ffee00" stroke-width="1.6"/></g></svg>
<div class="abs" style="left:130px;top:56px;width:20px;height:19px;border-top:1px solid #fff;border-left:1px solid #fff;border-right:1px solid #404040;border-bottom:1px solid #404040;"></div>
<svg class="abs" style="left:132px;top:58px" width="18" height="18" viewBox="0 0 18 18" shape-rendering="crispEdges"><path d="M5 3h7l3 3v10H5z" fill="#fff" stroke="#000"/><path d="M7 8h6M7 10h6M7 12h6M7 14h6" stroke="#000"/><path d="M2 2l3 3M4 1v3M1 4h3" stroke="#e8d800" stroke-width="1.5"/></svg>
<div class="abs" style="left:152px;top:56px;width:20px;height:19px;border-top:1px solid #fff;border-left:1px solid #fff;border-right:1px solid #404040;border-bottom:1px solid #404040;"></div>
<svg class="abs" style="left:154px;top:58px" width="18" height="18" viewBox="0 0 18 18" shape-rendering="crispEdges"><rect x="2" y="4" width="14" height="12" fill="#fff" stroke="#000"/><rect x="4" y="9" width="3" height="7" fill="#00f"/><rect x="7" y="6" width="3" height="10" fill="#ff0"/><rect x="11" y="8" width="3" height="8" fill="#f0f"/><path d="M1 1l3 3M3 0v3M0 3h3" stroke="#e8d800" stroke-width="1.5"/></svg>
<div class="abs" style="left:173px;top:56px;width:20px;height:19px;border-top:1px solid #fff;border-left:1px solid #fff;border-right:1px solid #404040;border-bottom:1px solid #404040;"></div>
<svg class="abs" style="left:175px;top:58px" width="18" height="18" viewBox="0 0 18 18" shape-rendering="crispEdges"><rect x="2" y="5" width="15" height="11" fill="#000" stroke="#444"/><path d="M4 9h2M8 9h2M12 9h2M4 12h2M8 12h2M12 12h2" stroke="#0f0" stroke-width="1.5"/><path d="M8 12h2" stroke="#f00" stroke-width="1.5"/><path d="M1 1l3 3M3 0v3M0 3h3" stroke="#e8d800" stroke-width="1.5"/></svg>
<div class="abs" style="left:195px;top:56px;width:20px;height:19px;border-top:1px solid #fff;border-left:1px solid #fff;border-right:1px solid #404040;border-bottom:1px solid #404040;"></div>
<svg class="abs" style="left:197px;top:58px" width="18" height="18" viewBox="0 0 18 18" shape-rendering="crispEdges"><rect x="2" y="5" width="4" height="11" fill="#2030ff"/><rect x="6" y="4" width="4" height="12" fill="#ffe000"/><rect x="10" y="5" width="4" height="11" fill="#e020e0"/><path d="M3 5q3-4 6 0M8 5q3-4 6 0" fill="none" stroke="#808080"/></svg>
<div class="abs" style="left:216px;top:56px;width:20px;height:19px;border-top:1px solid #fff;border-left:1px solid #fff;border-right:1px solid #404040;border-bottom:1px solid #404040;"></div>
<svg class="abs" style="left:218px;top:58px" width="20" height="18" viewBox="0 0 20 18" shape-rendering="crispEdges"><path d="M2 6h5l1 1h6v9H2z" fill="#e8d860" stroke="#000"/><path d="M2 16l3-6h13l-3 6z" fill="#f8f080" stroke="#000"/><path d="M12 3q4-1 5 3" fill="none" stroke="#000"/></svg>
<div class="abs" style="left:238px;top:56px;width:20px;height:19px;border-top:1px solid #fff;border-left:1px solid #fff;border-right:1px solid #404040;border-bottom:1px solid #404040;"></div>
<svg class="abs" style="left:240px;top:58px" width="18" height="18" viewBox="0 0 18 18" shape-rendering="crispEdges"><rect x="2" y="2" width="14" height="14" fill="#000"/><rect x="4" y="3" width="10" height="6" fill="#c0c0c0"/><rect x="5" y="11" width="8" height="4" fill="#e8d800"/></svg>
<div class="abs" style="left:264px;top:56px;width:20px;height:19px;border-top:1px solid #fff;border-left:1px solid #fff;border-right:1px solid #404040;border-bottom:1px solid #404040;"></div>
<svg class="abs" style="left:266px;top:58px" width="18" height="18" viewBox="0 0 18 18" shape-rendering="crispEdges"><path d="M6 2l5 10M12 2L7 12" stroke="#a0a0a0" stroke-width="1.2"/><circle cx="6" cy="14" r="2.5" fill="none" stroke="#a0a0a0"/><circle cx="12" cy="14" r="2.5" fill="none" stroke="#a0a0a0"/></svg>
<div class="abs" style="left:288px;top:56px;width:20px;height:19px;border-top:1px solid #fff;border-left:1px solid #fff;border-right:1px solid #404040;border-bottom:1px solid #404040;"></div>
<svg class="abs" style="left:290px;top:58px" width="18" height="18" viewBox="0 0 18 18" shape-rendering="crispEdges"><rect x="3" y="3" width="8" height="9" fill="#d0d0d0" stroke="#909090"/><rect x="7" y="7" width="8" height="9" fill="#c8c8c8" stroke="#909090"/><path d="M9 10h4M9 12h4" stroke="#909090"/></svg>
<div class="abs" style="left:310px;top:56px;width:20px;height:19px;border-top:1px solid #fff;border-left:1px solid #fff;border-right:1px solid #404040;border-bottom:1px solid #404040;"></div>
<svg class="abs" style="left:312px;top:58px" width="18" height="18" viewBox="0 0 18 18" shape-rendering="crispEdges"><rect x="3" y="3" width="8" height="9" fill="#d0d0d0" stroke="#909090"/><rect x="7" y="7" width="8" height="9" fill="#c8c8c8" stroke="#909090"/><path d="M9 10h4M9 12h4" stroke="#909090"/></svg>
<div class="abs" style="left:338px;top:56px;width:20px;height:19px;border-top:1px solid #fff;border-left:1px solid #fff;border-right:1px solid #404040;border-bottom:1px solid #404040;"></div>
<svg class="abs" style="left:340px;top:58px" width="18" height="18" viewBox="0 0 18 18" shape-rendering="crispEdges"><rect x="5" y="2" width="8" height="5" fill="#fff" stroke="#000"/><rect x="2" y="7" width="14" height="7" fill="#c0c0c0" stroke="#000"/><rect x="4" y="13" width="10" height="3" fill="#fff" stroke="#000"/><path d="M3 10h12" stroke="#000"/></svg>
<div class="abs" style="left:360px;top:56px;width:20px;height:19px;border-top:1px solid #fff;border-left:1px solid #fff;border-right:1px solid #404040;border-bottom:1px solid #404040;"></div>
<svg class="abs" style="left:362px;top:58px" width="18" height="18" viewBox="0 0 18 18" shape-rendering="crispEdges"><rect x="3" y="3" width="8" height="9" fill="#d0d0d0" stroke="#909090"/><rect x="7" y="7" width="8" height="9" fill="#c8c8c8" stroke="#909090"/><path d="M9 10h4M9 12h4" stroke="#909090"/></svg>
<div class="abs" style="left:390px;top:56px;width:20px;height:19px;border-top:1px solid #fff;border-left:1px solid #fff;border-right:1px solid #404040;border-bottom:1px solid #404040;"></div>
<svg class="abs" style="left:392px;top:58px" width="18" height="18" viewBox="0 0 18 18" shape-rendering="crispEdges"><rect x="3" y="3" width="8" height="9" fill="#d0d0d0" stroke="#909090"/><rect x="7" y="7" width="8" height="9" fill="#c8c8c8" stroke="#909090"/><path d="M9 10h4M9 12h4" stroke="#909090"/></svg>
<div class="abs" style="left:411px;top:56px;width:20px;height:19px;border-top:1px solid #fff;border-left:1px solid #fff;border-right:1px solid #404040;border-bottom:1px solid #404040;"></div>
<svg class="abs" style="left:413px;top:58px" width="18" height="18" viewBox="0 0 18 18" shape-rendering="crispEdges"><rect x="3" y="3" width="8" height="9" fill="#d0d0d0" stroke="#909090"/><rect x="7" y="7" width="8" height="9" fill="#c8c8c8" stroke="#909090"/><path d="M9 10h4M9 12h4" stroke="#909090"/></svg>
<div class="abs" style="left:433px;top:56px;width:20px;height:19px;border-top:1px solid #fff;border-left:1px solid #fff;border-right:1px solid #404040;border-bottom:1px solid #404040;"></div>
<svg class="abs" style="left:435px;top:58px" width="18" height="18" viewBox="0 0 18 18" shape-rendering="crispEdges"><path d="M9 2q-1 4-4 5q-2 4 1 8h7q3-4 0-8q-1 2-2 2q0-4-2-7z" fill="#ff2000"/><path d="M9 8q-2 3-1 6h3q1-3-2-6z" fill="#ffd000"/></svg>
<div class="abs" style="left:460px;top:56px;width:20px;height:19px;border-top:1px solid #fff;border-left:1px solid #fff;border-right:1px solid #404040;border-bottom:1px solid #404040;"></div>
<svg class="abs" style="left:462px;top:58px" width="18" height="18" viewBox="0 0 18 18" shape-rendering="crispEdges"><path d="M5 2l4 5H6v9H4V7H1z" fill="#00c000"/><path d="M12 16l4-5h-3V2h-2v9H8z" fill="#f00000"/></svg>
<div class="abs" style="left:482px;top:56px;width:20px;height:19px;border-top:1px solid #fff;border-left:1px solid #fff;border-right:1px solid #404040;border-bottom:1px solid #404040;"></div>
<svg class="abs" style="left:484px;top:58px" width="18" height="18" viewBox="0 0 18 18" shape-rendering="crispEdges"><rect x="3" y="3" width="8" height="9" fill="#d0d0d0" stroke="#909090"/><rect x="7" y="7" width="8" height="9" fill="#c8c8c8" stroke="#909090"/><path d="M9 10h4M9 12h4" stroke="#909090"/></svg>
<div class="abs" style="left:504px;top:56px;width:20px;height:19px;border-top:1px solid #fff;border-left:1px solid #fff;border-right:1px solid #404040;border-bottom:1px solid #404040;"></div>
<svg class="abs" style="left:506px;top:58px" width="18" height="18" viewBox="0 0 18 18" shape-rendering="crispEdges"><path d="M9 3q-4 0-4 6v3l-2 2h12l-2-2V9q0-6-4-6z" fill="#ffe800" stroke="#000"/><rect x="8" y="14" width="2" height="2" fill="#000"/><path d="M1 5l2 2M17 5l-2 2M0 10h2M16 10h2" stroke="#000"/></svg>
<div class="abs" style="left:532px;top:56px;width:20px;height:19px;border-top:1px solid #fff;border-left:1px solid #fff;border-right:1px solid #404040;border-bottom:1px solid #404040;"></div>
<svg class="abs" style="left:534px;top:58px" width="18" height="18" viewBox="0 0 18 18" shape-rendering="crispEdges"><circle cx="8" cy="8" r="6" fill="#40e0f0" stroke="#000"/><text x="5" y="12" font-size="10" font-weight="bold" fill="#202080" font-family="Liberation Sans">S</text><path d="M12 12l4 4" stroke="#4040c0" stroke-width="2"/></svg>
<div class="abs" style="left:556px;top:56px;width:20px;height:19px;border-top:1px solid #fff;border-left:1px solid #fff;border-right:1px solid #404040;border-bottom:1px solid #404040;"></div>
<svg class="abs" style="left:558px;top:58px" width="20" height="18" viewBox="0 0 20 18" shape-rendering="crispEdges"><path d="M3 2v12l3-3 2 5 2-1-2-5h4z" fill="#000"/><text x="9" y="15" font-size="14" font-weight="bold" fill="#ffe800" stroke="#000" stroke-width="0.6" font-family="Liberation Sans">?</text></svg>
<div class="abs" style="left:589px;top:56px;width:64px;height:19px;border-top:1px solid #fff;border-left:1px solid #fff;border-right:1px solid #404040;border-bottom:1px solid #404040;"></div>
<svg class="abs" style="left:593px;top:58px" width="18" height="18" viewBox="0 0 18 18" shape-rendering="crispEdges"><circle cx="8" cy="7" r="5" fill="#202020"/><circle cx="9" cy="8" r="3.5" fill="#f0c890"/><path d="M3 17q1-4 5-4h2q4 0 4 4z" fill="#2040ff"/><path d="M9 13h3v4H9z" fill="#00c000"/></svg>
<div class="t" style="left:608px;top:59px;font-size:13px;font-weight:bold;color:#000;line-height:16px;letter-spacing:-0.3px;">Central</div>
<div class="abs" style="left:661px;top:56px;width:62px;height:19px;border-top:1px solid #fff;border-left:1px solid #fff;border-right:1px solid #404040;border-bottom:1px solid #404040;"></div>
<svg class="abs" style="left:664px;top:58px" width="26" height="18" viewBox="0 0 26 18" shape-rendering="crispEdges"><path d="M2 12q6 6 12 0" fill="none" stroke="#20c040" stroke-width="2.5" shape-rendering="auto"/><path d="M10 6q6-6 13 0" fill="none" stroke="#2040d0" stroke-width="2.5" shape-rendering="auto"/><path d="M1 9l5 1-3 4z" fill="#20c040"/><path d="M25 9l-5-1 3-4z" fill="#2040d0"/></svg>
<div class="t" style="left:690px;top:59px;font-size:13px;font-weight:bold;color:#000;line-height:16px;letter-spacing:-0.3px;">Trade</div>
<div class="abs" style="left:0px;top:104px;width:1280px;height:1px;background:#aca899;"></div>
<div class="abs" style="left:0px;top:105px;width:1280px;height:1px;background:#fcfcf8;"></div>
<div class="abs" style="left:2px;top:82px;width:1px;height:19px;background:#fff;border-right:1px solid #aca899;"></div>
<div class="abs" style="left:9px;top:81px;width:21px;height:20px;background:#f6f4ee;border:1px solid #a8a698;border-right-color:#fff;border-bottom-color:#fff;"></div>
<div class="abs" style="left:180px;top:81px;width:20px;height:20px;background:#f6f4ee;border:1px solid #a8a698;border-right-color:#fff;border-bottom-color:#fff;"></div>
<div class="abs" style="left:357px;top:81px;width:21px;height:20px;background:#f6f4ee;border:1px solid #a8a698;border-right-color:#fff;border-bottom-color:#fff;"></div>
<div class="abs" style="left:401px;top:81px;width:21px;height:20px;background:#f6f4ee;border:1px solid #a8a698;border-right-color:#fff;border-bottom-color:#fff;"></div>
<div class="abs" style="left:489px;top:81px;width:21px;height:20px;background:#f6f4ee;border:1px solid #a8a698;border-right-color:#fff;border-bottom-color:#fff;"></div>
<div class="abs" style="left:932px;top:81px;width:20px;height:20px;background:#f6f4ee;border:1px solid #a8a698;border-right-color:#fff;border-bottom-color:#fff;"></div>
<div class="abs" style="left:78px;top:83px;width:1px;height:18px;background:#aca899;border-right:1px solid #fff;"></div>
<div class="abs" style="left:174px;top:83px;width:1px;height:18px;background:#aca899;border-right:1px solid #fff;"></div>
<div class="abs" style="left:248px;top:83px;width:1px;height:18px;background:#aca899;border-right:1px solid #fff;"></div>
<div class="abs" style="left:300px;top:83px;width:1px;height:18px;background:#aca899;border-right:1px solid #fff;"></div>
<div class="abs" style="left:352px;top:83px;width:1px;height:18px;background:#aca899;border-right:1px solid #fff;"></div>
<div class="abs" style="left:448px;top:83px;width:1px;height:18px;background:#aca899;border-right:1px solid #fff;"></div>
<div class="abs" style="left:478px;top:83px;width:1px;height:18px;background:#aca899;border-right:1px solid #fff;"></div>
<div class="abs" style="left:690px;top:83px;width:1px;height:18px;background:#aca899;border-right:1px solid #fff;"></div>
<div class="abs" style="left:786px;top:83px;width:1px;height:18px;background:#aca899;border-right:1px solid #fff;"></div>
<div class="abs" style="left:816px;top:83px;width:1px;height:18px;background:#aca899;border-right:1px solid #fff;"></div>
<div class="abs" style="left:955px;top:83px;width:1px;height:18px;background:#aca899;border-right:1px solid #fff;"></div>
<svg class="abs" style="left:14px;top:83px" width="18" height="18" viewBox="0 0 18 18" shape-rendering="crispEdges"><path d="M7 2v13M3 11h4M7 6h4" stroke="#000" stroke-width="2.2"/></svg>
<svg class="abs" style="left:36px;top:83px" width="18" height="18" viewBox="0 0 18 18" shape-rendering="crispEdges"><path d="M6 1v16" stroke="#000" stroke-width="1.5"/><rect x="4" y="4" width="5" height="9" fill="#000"/></svg>
<svg class="abs" style="left:56px;top:83px" width="18" height="18" viewBox="0 0 18 18" shape-rendering="crispEdges"><path d="M1 13l4-3 3 2 4-5 4-3" fill="none" stroke="#000" stroke-width="1.8" shape-rendering="auto"/></svg>
<svg class="abs" style="left:86px;top:83px" width="18" height="18" viewBox="0 0 18 18" shape-rendering="crispEdges"><path d="M2 2l3 3M5 2L2 5M2 9l3 3M5 9l-3 3" stroke="#000"/><circle cx="10" cy="11" r="2.5" fill="none" stroke="#000"/></svg>
<svg class="abs" style="left:108px;top:83px" width="18" height="18" viewBox="0 0 18 18" shape-rendering="crispEdges"><path d="M3 3v6h2v4M8 2v12M11 1v10" stroke="#000" stroke-width="2"/></svg>
<svg class="abs" style="left:131px;top:83px" width="18" height="18" viewBox="0 0 18 18" shape-rendering="crispEdges"><rect x="1.5" y="11.5" width="3" height="3" fill="none" stroke="#000"/><rect x="6.5" y="6.5" width="3" height="3" fill="none" stroke="#000"/><rect x="11.5" y="2.5" width="3" height="3" fill="none" stroke="#000"/></svg>
<svg class="abs" style="left:153px;top:83px" width="18" height="18" viewBox="0 0 18 18" shape-rendering="crispEdges"><path d="M2 12V7h3v5h3V4h3v5h3V4" fill="none" stroke="#000" stroke-width="1.4"/></svg>
<svg class="abs" style="left:183px;top:83px" width="18" height="18" viewBox="0 0 18 18" shape-rendering="crispEdges"><path d="M1 10h15M8 1v5M8 11v5M3 10l3-3 3 3 3-3 3 3" fill="none" stroke="#000" stroke-width="1.2"/><path d="M6 3h4L8 6zM6 14h4L8 11z" fill="#000"/></svg>
<svg class="abs" style="left:203px;top:83px" width="18" height="18" viewBox="0 0 18 18" shape-rendering="crispEdges"><path d="M1 4h15M1 13h15M8 4v9" stroke="#000" stroke-width="1.2"/><path d="M5 1h6L8 4zM5 16h6L8 13z" fill="#000"/></svg>
<svg class="abs" style="left:225px;top:83px" width="18" height="18" viewBox="0 0 18 18" shape-rendering="crispEdges"><path d="M1 12l3-3 2 2 3-5 3 3 3-2" fill="none" stroke="#000" stroke-width="1.2"/><path d="M11 1v16" stroke="#000"/><path d="M9 3h4l-2-3zM9 14h4l-2 3z" fill="#000"/></svg>
<svg class="abs" style="left:258px;top:83px" width="18" height="18" viewBox="0 0 18 18" shape-rendering="crispEdges"><path d="M4 2h4v6h3v7H8v-3H5V6H3z" fill="none" stroke="#000" stroke-width="1.5"/></svg>
<svg class="abs" style="left:281px;top:83px" width="18" height="18" viewBox="0 0 18 18" shape-rendering="crispEdges"><path d="M5 2v14M3 5h2M5 12h3" stroke="#000" stroke-width="1.6"/></svg>
<svg class="abs" style="left:310px;top:83px" width="18" height="18" viewBox="0 0 18 18" shape-rendering="crispEdges"><path d="M5 5L1 9l4 4zM8 5l4 4-4 4z" fill="none" stroke="#000" stroke-width="1.2"/><path d="M7 5v8" stroke="#000"/></svg>
<svg class="abs" style="left:333px;top:83px" width="18" height="18" viewBox="0 0 18 18" shape-rendering="crispEdges"><path d="M1 5l4 4-4 4zM11 5L7 9l4 4z" fill="none" stroke="#000" stroke-width="1.2"/></svg>
<svg class="abs" style="left:361px;top:83px" width="18" height="18" viewBox="0 0 18 18" shape-rendering="crispEdges"><path d="M4 2v15M4 6h12" stroke="#000" stroke-width="1.5"/></svg>
<svg class="abs" style="left:385px;top:83px" width="18" height="18" viewBox="0 0 18 18" shape-rendering="crispEdges"><rect x="0" y="1" width="10" height="16" fill="#000"/><rect x="1" y="9" width="8" height="2" fill="#f00"/><rect x="1" y="11" width="8" height="2" fill="#0c0"/><rect x="1" y="13" width="8" height="3" fill="#00f"/></svg>
<svg class="abs" style="left:405px;top:83px" width="18" height="18" viewBox="0 0 18 18" shape-rendering="crispEdges"><rect x="1.5" y="6.5" width="14" height="5" fill="none" stroke="#000" stroke-width="1.4"/><path d="M6 7v4M11 7v4" stroke="#000"/></svg>
<svg class="abs" style="left:455px;top:83px" width="18" height="18" viewBox="0 0 18 18" shape-rendering="crispEdges"><rect x="1.5" y="5.5" width="11" height="11" fill="#fff" stroke="#000"/><path d="M3 9h8M3 12h8M3 14h8" stroke="#000"/><path d="M6 4l6-3h4v4l-6 2" fill="#fff" stroke="#000"/><rect x="15" y="1" width="2" height="5" fill="#00f"/></svg>
<svg class="abs" style="left:492px;top:83px" width="18" height="18" viewBox="0 0 18 18" shape-rendering="crispEdges"><path d="M2 2l13 13M15 2L2 15" stroke="#000" stroke-width="2.4" shape-rendering="auto"/></svg>
<svg class="abs" style="left:514px;top:83px" width="18" height="18" viewBox="0 0 18 18" shape-rendering="crispEdges"><path d="M2 3l3-2 10 10-1 4-4-1z" fill="#ffe800" stroke="#000" shape-rendering="auto"/><circle cx="13" cy="13" r="2" fill="#c00000"/></svg>
<svg class="abs" style="left:537px;top:83px" width="18" height="18" viewBox="0 0 18 18" shape-rendering="crispEdges"><path d="M3 14L12 4" stroke="#000"/><rect x="1.5" y="12.5" width="2" height="2" fill="none" stroke="#000"/><rect x="11.5" y="2.5" width="2" height="2" fill="none" stroke="#000"/></svg>
<svg class="abs" style="left:557px;top:83px" width="18" height="18" viewBox="0 0 18 18" shape-rendering="crispEdges"><path d="M1 15L16 1" stroke="#000"/><rect x="2.5" y="11.5" width="2" height="2" fill="none" stroke="#000"/><rect x="8.5" y="6.5" width="2" height="2" fill="none" stroke="#000"/></svg>
<svg class="abs" style="left:579px;top:83px" width="18" height="18" viewBox="0 0 18 18" shape-rendering="crispEdges"><path d="M1 15L16 1" stroke="#000"/><rect x="5.5" y="9.5" width="2" height="2" fill="none" stroke="#000"/><rect x="10.5" y="4.5" width="2" height="2" fill="none" stroke="#000"/></svg>
<svg class="abs" style="left:605px;top:83px" width="18" height="18" viewBox="0 0 18 18" shape-rendering="crispEdges"><path d="M4 3v11" stroke="#000"/><rect x="2.5" y="1.5" width="3" height="2" fill="none" stroke="#000"/><rect x="2.5" y="13.5" width="3" height="2" fill="none" stroke="#000"/></svg>
<svg class="abs" style="left:624px;top:83px" width="18" height="18" viewBox="0 0 18 18" shape-rendering="crispEdges"><path d="M3 9h10" stroke="#000"/><rect x="1.5" y="7.5" width="2" height="3" fill="none" stroke="#000"/><rect x="12.5" y="7.5" width="2" height="3" fill="none" stroke="#000"/></svg>
<svg class="abs" style="left:646px;top:83px" width="18" height="18" viewBox="0 0 18 18" shape-rendering="crispEdges"><path d="M1 10L16 4" stroke="#00f" stroke-width="1.3"/><path d="M1 12L16 6" stroke="#000" stroke-width="1.3"/><path d="M1 14L16 8" stroke="#f00" stroke-width="1.3"/></svg>
<svg class="abs" style="left:668px;top:83px" width="18" height="18" viewBox="0 0 18 18" shape-rendering="crispEdges"><path d="M1 12l6-7M3 14l6-7M5 16l6-7" stroke="#a02020" stroke-width="1.2"/><path d="M7 5l3-3" stroke="#20a020"/><path d="M2 8l12 9" stroke="#2020c0" stroke-width="1.2"/></svg>
<svg class="abs" style="left:697px;top:83px" width="18" height="18" viewBox="0 0 18 18" shape-rendering="crispEdges"><text x="1" y="8" font-size="8.5" fill="#000" font-family="Liberation Sans">FIB</text><text x="0" y="16" font-size="8.5" fill="#000" font-family="Liberation Sans">RET</text></svg>
<svg class="abs" style="left:719px;top:83px" width="18" height="18" viewBox="0 0 18 18" shape-rendering="crispEdges"><text x="1" y="8" font-size="8.5" fill="#000" font-family="Liberation Sans">FIB</text><text x="0" y="16" font-size="8.5" fill="#000" font-family="Liberation Sans">EXT</text></svg>
<svg class="abs" style="left:742px;top:83px" width="18" height="18" viewBox="0 0 18 18" shape-rendering="crispEdges"><path d="M2 14a7 7 0 0 1 14 0" fill="none" stroke="#f00" stroke-width="1.5" shape-rendering="auto"/><path d="M4.5 14a4.5 4.5 0 0 1 9 0" fill="none" stroke="#00f" stroke-width="1.5" shape-rendering="auto"/><text x="3" y="17" font-size="8.5" fill="#000" font-family="Liberation Sans">FIB</text></svg>
<svg class="abs" style="left:764px;top:83px" width="18" height="18" viewBox="0 0 18 18" shape-rendering="crispEdges"><text x="2" y="8" font-size="8.5" fill="#000" font-family="Liberation Sans">FIB</text><text x="0" y="16" font-size="8.5" fill="#000" font-family="Liberation Sans">TIME</text></svg>
<svg class="abs" style="left:793px;top:83px" width="18" height="18" viewBox="0 0 18 18" shape-rendering="crispEdges"><circle cx="6" cy="5" r="4" fill="#fff" stroke="#000"/><rect x="7.5" y="8.5" width="9" height="8" fill="#fff" stroke="#000"/></svg>
<svg class="abs" style="left:824px;top:83px" width="18" height="18" viewBox="0 0 18 18" shape-rendering="crispEdges"><circle cx="7" cy="7" r="5" fill="#fff" stroke="#000" stroke-width="1.5" shape-rendering="auto"/><path d="M4 7h6M7 4v6" stroke="#000"/><path d="M10.5 10.5l5 5" stroke="#000" stroke-width="2.2"/></svg>
<svg class="abs" style="left:846px;top:83px" width="18" height="18" viewBox="0 0 18 18" shape-rendering="crispEdges"><circle cx="7" cy="7" r="5" fill="none" stroke="#a8a8a8" stroke-width="1.5" shape-rendering="auto"/><path d="M4 7h6" stroke="#a8a8a8"/><path d="M10.5 10.5l5 5" stroke="#a8a8a8" stroke-width="2.2"/></svg>
<svg class="abs" style="left:869px;top:83px" width="18" height="18" viewBox="0 0 18 18" shape-rendering="crispEdges"><path d="M2 6l5-5 9 9-5 5z" fill="#ffe800" stroke="#000" shape-rendering="auto"/><path d="M2 6l5-5 4 4-5 5z" fill="#800000" stroke="#000" shape-rendering="auto"/></svg>
<svg class="abs" style="left:890px;top:83px" width="18" height="18" viewBox="0 0 18 18" shape-rendering="crispEdges"><rect x="0.5" y="1.5" width="14" height="14" fill="#fff" stroke="#000"/><path d="M2 3l4 4M13 3l-4 4M2 14l4-4M13 14l-4-4M7.5 3v11M2 8.5h11" stroke="#000" stroke-dasharray="1 1"/></svg>
<svg class="abs" style="left:912px;top:83px" width="18" height="18" viewBox="0 0 18 18" shape-rendering="crispEdges"><rect x="0.5" y="3.5" width="9" height="12" fill="#fff" stroke="#000"/><rect x="5.5" y="1.5" width="9" height="13" fill="#fff" stroke="#000"/><path d="M7 5h6M7 7h6M7 9h6M7 11h6" stroke="#000"/></svg>
<svg class="abs" style="left:935px;top:83px" width="18" height="18" viewBox="0 0 18 18" shape-rendering="crispEdges"><path d="M2 1v9a6 6 0 0 0 12 0V1h-4v9a2 2 0 0 1-4 0V1z" fill="#e00000" shape-rendering="auto"/><rect x="2" y="1" width="4" height="2" fill="#000"/><rect x="10" y="1" width="4" height="2" fill="#000"/></svg>
<svg class="abs" style="left:424px;top:83px" width="20" height="18" viewBox="0 0 20 18" shape-rendering="crispEdges"><path d="M11 1v7M8 6h3" stroke="#000" stroke-width="1.5"/><text x="1" y="17" font-size="6.6" font-weight="bold" fill="#000" font-family="Liberation Sans" textLength="18" lengthAdjust="spacingAndGlyphs">RESET</text></svg>
<div class="abs" style="left:955px;top:79px;width:1px;height:26px;background:#aca899;"></div>
<div class="abs" style="left:2px;top:108px;width:1px;height:19px;background:#fff;border-right:1px solid #aca899;"></div>
<svg class="abs" style="left:12px;top:108px" width="19" height="17" viewBox="0 0 19 17" shape-rendering="crispEdges"><rect x="1.5" y="0.5" width="15" height="6" fill="#808080" stroke="#000" stroke-width="1"/><g shape-rendering="auto"><rect x="1.5" y="9" width="15.5" height="7" rx="3.5" fill="none" stroke="#000" stroke-width="3"/><rect x="1.5" y="9" width="15.5" height="7" rx="3.5" fill="none" stroke="#ffee00" stroke-width="1.6"/><path d="M5 12.5h9" stroke="#000" stroke-width="3"/><path d="M5.5 12.5h8" stroke="#ffee00" stroke-width="1.6"/></g></svg>
<svg class="abs" style="left:35px;top:109px" width="18" height="18" viewBox="0 0 18 18" shape-rendering="crispEdges"><rect x="1.5" y="5.5" width="11" height="11" fill="#fff" stroke="#000"/><path d="M3 9h8M3 12h8M3 14h8" stroke="#000"/><path d="M6 4l6-3h4v4l-6 2" fill="#fff" stroke="#000"/><rect x="15" y="1" width="2" height="5" fill="#00f"/></svg>
<svg class="abs" style="left:58px;top:111px" width="14" height="14" viewBox="0 0 14 14" shape-rendering="crispEdges"><path d="M7 1v12M1 7h12" stroke="#000" stroke-width="3"/></svg>
<svg class="abs" style="left:80px;top:110px" width="17" height="16" viewBox="0 0 17 16" shape-rendering="crispEdges"><path d="M1.5 4.5h4l1 -2h4v2h5v10h-14z" fill="#ffff90" stroke="#808080"/><rect x="1.5" y="5.5" width="14" height="9" fill="#ffff80" stroke="#808080"/></svg>
<div class="t" style="left:102px;top:111px;font-size:11px;font-weight:normal;color:#000;line-height:14px;">Equities</div>
<svg class="abs" style="left:144px;top:115px" width="8" height="6" viewBox="0 0 8 6" shape-rendering="crispEdges"><path d="M1 1h6L4 4z" fill="#000"/></svg>
<svg class="abs" style="left:160px;top:110px" width="17" height="16" viewBox="0 0 17 16" shape-rendering="crispEdges"><path d="M1.5 4.5h4l1 -2h4v2h5v10h-14z" fill="#ffff90" stroke="#808080"/><rect x="1.5" y="5.5" width="14" height="9" fill="#ffff80" stroke="#808080"/></svg>
<div class="t" style="left:183px;top:111px;font-size:11px;font-weight:normal;color:#000;line-height:14px;">Other Intervals</div>
<svg class="abs" style="left:260px;top:115px" width="8" height="6" viewBox="0 0 8 6" shape-rendering="crispEdges"><path d="M1 1h6L4 4z" fill="#000"/></svg>
<svg class="abs" style="left:277px;top:110px" width="16" height="16" viewBox="0 0 16 16" shape-rendering="crispEdges"><circle cx="7.5" cy="8" r="6.5" fill="none" stroke="#000" stroke-width="1.1" shape-rendering="auto"/><text x="7.5" y="12" font-size="9.5" text-anchor="middle" fill="#000" font-family="Liberation Sans">S</text></svg>
<div class="t" style="left:297px;top:111px;font-size:11.5px;font-weight:normal;color:#000;line-height:14px;">IDC</div>
<svg class="abs" style="left:325px;top:110px" width="16" height="16" viewBox="0 0 16 16" shape-rendering="crispEdges"><circle cx="7.5" cy="8" r="6.5" fill="none" stroke="#000" stroke-width="1.1" shape-rendering="auto"/><text x="7.5" y="12" font-size="9.5" text-anchor="middle" fill="#000" font-family="Liberation Sans">I</text></svg>
<div class="t" style="left:347px;top:111px;font-size:11.5px;font-weight:normal;color:#000;line-height:14px;">1</div>
<svg class="abs" style="left:362px;top:110px" width="16" height="16" viewBox="0 0 16 16" shape-rendering="crispEdges"><circle cx="7.5" cy="8" r="6.5" fill="none" stroke="#000" stroke-width="1.1" shape-rendering="auto"/><text x="7.5" y="12" font-size="9.5" text-anchor="middle" fill="#000" font-family="Liberation Sans">I</text></svg>
<div class="t" style="left:384px;top:111px;font-size:11.5px;font-weight:normal;color:#000;line-height:14px;">5</div>
<svg class="abs" style="left:399px;top:110px" width="16" height="16" viewBox="0 0 16 16" shape-rendering="crispEdges"><circle cx="7.5" cy="8" r="6.5" fill="none" stroke="#000" stroke-width="1.1" shape-rendering="auto"/><text x="7.5" y="12" font-size="9.5" text-anchor="middle" fill="#000" font-family="Liberation Sans">I</text></svg>
<div class="t" style="left:420px;top:111px;font-size:11.5px;font-weight:normal;color:#000;line-height:14px;">60</div>
<svg class="abs" style="left:442px;top:110px" width="16" height="16" viewBox="0 0 16 16" shape-rendering="crispEdges"><circle cx="7.5" cy="8" r="6.5" fill="none" stroke="#000" stroke-width="1.1" shape-rendering="auto"/><text x="7.5" y="12" font-size="9.5" text-anchor="middle" fill="#000" font-family="Liberation Sans">I</text></svg>
<div class="t" style="left:463px;top:111px;font-size:11.5px;font-weight:normal;color:#000;line-height:14px;">Daily</div>
<svg class="abs" style="left:496px;top:110px" width="16" height="16" viewBox="0 0 16 16" shape-rendering="crispEdges"><circle cx="7.5" cy="8" r="6.5" fill="none" stroke="#000" stroke-width="1.1" shape-rendering="auto"/><text x="7.5" y="12" font-size="9.5" text-anchor="middle" fill="#000" font-family="Liberation Sans">I</text></svg>
<div class="t" style="left:517px;top:111px;font-size:11.5px;font-weight:normal;color:#000;line-height:14px;">Tick</div>
<div class="abs" style="left:543px;top:108px;width:1px;height:20px;background:#aca899;border-right:1px solid #fff;"></div>
<div class="abs" style="left:0px;top:750px;width:1280px;height:2px;background:#fbfaf4;"></div>
<div class="abs" style="left:0px;top:752px;width:1280px;height:1px;background:#bdbab0;"></div>
<div class="t" style="left:3px;top:755px;font-size:11px;font-weight:normal;color:#000;line-height:14px;">Thu Jan 05 09:03:02</div>
<div class="abs" style="left:1034px;top:753px;width:33px;height:16px;background:#c9c7c0;border-top:1px solid #9c9a90;border-left:1px solid #9c9a90;border-right:1px solid #fff;border-bottom:1px solid #fff;box-sizing:border-box;font:11.2px 'Liberation Sans', sans-serif;line-height:15px;text-align:center;color:#000;"></div>
<div class="abs" style="left:1069px;top:753px;width:30px;height:16px;background:#c9c7c0;border-top:1px solid #9c9a90;border-left:1px solid #9c9a90;border-right:1px solid #fff;border-bottom:1px solid #fff;box-sizing:border-box;font:11.2px 'Liberation Sans', sans-serif;line-height:15px;text-align:center;color:#000;"></div>
<div class="abs" style="left:1101px;top:753px;width:59px;height:16px;background:#c9c7c0;border-top:1px solid #9c9a90;border-left:1px solid #9c9a90;border-right:1px solid #fff;border-bottom:1px solid #fff;box-sizing:border-box;font:11.2px 'Liberation Sans', sans-serif;line-height:15px;text-align:center;color:#000;">Sym 22</div>
<div class="abs" style="left:1163px;top:753px;width:52px;height:16px;background:#00ff00;border-top:1px solid #9c9a90;border-left:1px solid #9c9a90;border-right:1px solid #fff;border-bottom:1px solid #fff;box-sizing:border-box;font:11.2px 'Liberation Sans', sans-serif;line-height:15px;text-align:center;color:#000;">OK</div>
<div class="abs" style="left:1217px;top:753px;width:45px;height:16px;background:#00ff00;border-top:1px solid #9c9a90;border-left:1px solid #9c9a90;border-right:1px solid #fff;border-bottom:1px solid #fff;box-sizing:border-box;font:11.2px 'Liberation Sans', sans-serif;line-height:15px;text-align:center;color:#000;">OK</div>
<svg class="abs" style="left:1265px;top:755px" width="14" height="14" viewBox="0 0 14 14" shape-rendering="crispEdges"><path d="M13 2L2 13M13 6L6 13M13 10l-3 3" stroke="#fff" stroke-width="1"/><path d="M13 3L3 13M13 7L7 13M13 11l-2 2" stroke="#a0a0a0" stroke-width="1"/></svg>
<div class="abs" style="left:0px;top:770px;width:106px;height:4px;background:#3c9a3c;"></div>
<div class="abs" style="left:106px;top:770px;width:938px;height:4px;background:#2060d8;"></div>
<div class="abs" style="left:1044px;top:770px;width:236px;height:4px;background:#1c8ef0;"></div>
</body></html>
